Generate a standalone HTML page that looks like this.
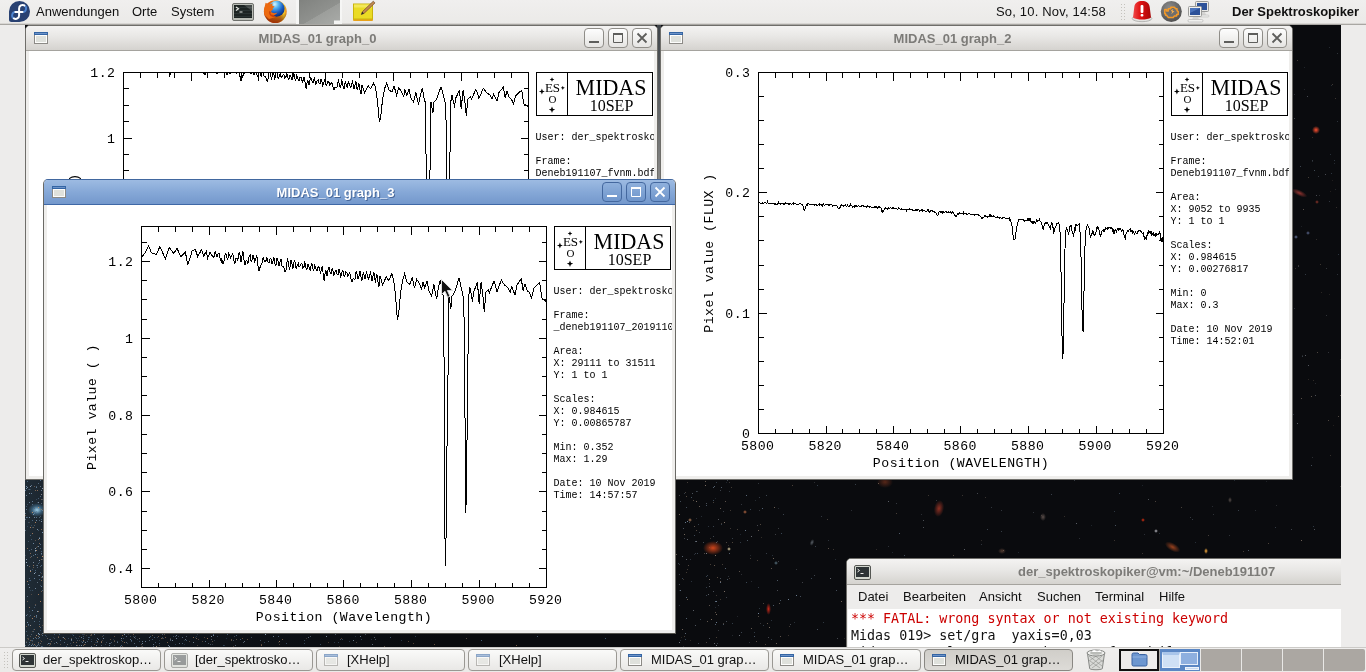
<!DOCTYPE html>
<html><head><meta charset="utf-8"><title>Der Spektroskopiker</title>
<style>
*{box-sizing:border-box;margin:0;padding:0}
html,body{width:1366px;height:672px;overflow:hidden;background:#edeceb;font-family:"Liberation Sans","DejaVu Sans",sans-serif;font-size:13px;color:#111}
#desk{position:absolute;left:25px;top:25px;width:1316px;height:622px;background:#0a0b0e;overflow:hidden}
#sky{position:absolute;left:-25px;top:-25px;width:1366px;height:672px}
#sky i{position:absolute;display:block}
#sky i.g{border-radius:50%}
#top{position:absolute;left:0;top:0;width:1366px;height:25px;background:linear-gradient(#f0efee,#ebeae8 23px,#d8d6d3 23.5px,#a9a7a3 24px,#a9a7a3 25px);z-index:50}
#top .mi{position:absolute;top:4px;font-size:13px;line-height:15px;white-space:nowrap}
#bot{position:absolute;left:0;top:647px;width:1366px;height:25px;background:linear-gradient(#a9a7a2,#efeeed 1px,#ebeae8 24px);z-index:50}
.fed{position:absolute;left:9px;top:1px}
.win,#term,#top,#bot{will-change:transform}
.win{position:absolute;width:633px;border:1px solid #6f6e6a;border-radius:5px 5px 0 0;background:#efeeec;overflow:hidden}
.win .tb{position:absolute;left:0;top:0;width:631px;height:25px;background:linear-gradient(#f4f3f2,#e8e7e5 45%,#d5d3cf);border-bottom:1px solid #a5a39e}
.win.foc{border-color:#41679f #6a6965 #55544f}
.win.foc .tb{background:linear-gradient(#9dbbe2,#86a8d7 50%,#7498cc);border-bottom:1px solid #3f68a6}
.win .tt{position:absolute;left:25.5px;width:532px;top:5px;text-align:center;font-weight:bold;font-size:13px;line-height:15px;color:#7c7b78}
.win.foc .tt{color:#fff;text-shadow:1px 1px 0 rgba(50,80,130,.7)}
.wicon{position:absolute;left:8px;top:6px}
.wicon.dim{opacity:.55}
.wbs{position:absolute;right:5px;top:2px;height:20px}
.wb{display:inline-block;width:20px;height:20px;margin-left:4px;border:1px solid #8f8d88;border-radius:4px;background:linear-gradient(#fdfdfd,#e6e5e3);vertical-align:top}
.wb.f{border-color:#44689f;background:linear-gradient(#8fb0dc,#6f95cb)}
.wb svg{display:block}
.client{position:absolute;left:3px;top:25px;width:625px;bottom:3px;background:#fff;overflow:hidden}
.plot{position:absolute;left:0;top:0}
.task{position:absolute;top:2px;width:149px;height:22px;border:1px solid #9a9893;border-radius:4px;background:linear-gradient(#fafaf9,#e9e8e6);font-size:13px;line-height:20px;white-space:nowrap;overflow:hidden}
.task.act{background:linear-gradient(#d0cec9,#dddbd7);border-color:#8a8883}
.task span{position:absolute;left:30px;top:0}
.task .wicon{left:7px;top:4px}
.task .ticon{position:absolute;left:6px;top:3px}
#term{position:absolute;left:846px;top:558px;width:521px;height:121px;border:1px solid #6f6e6a;border-radius:5px 5px 0 0;background:#edeceb;overflow:hidden;z-index:3}
#term .tb{position:absolute;left:0;top:0;width:100%;height:26px;background:linear-gradient(#f4f3f2,#e8e7e5 45%,#d5d3cf);border-bottom:1px solid #a5a39e}
#term .tt{position:absolute;left:171px;top:5px;font-weight:bold;font-size:13px;line-height:15px;color:#7c7b78;white-space:nowrap}
#term .ticon{position:absolute;left:7px;top:6px}
#term .menu{position:absolute;left:0;top:26px;width:100%;height:24px;padding-left:1px;background:#edeceb;font-size:13px;line-height:24px}
#term .menu span{position:absolute;top:0}
#term .scr{position:absolute;left:1px;top:50px;padding-top:1px;width:100%;height:80px;background:#fff;font-family:"DejaVu Sans Mono","Liberation Mono",monospace;font-size:13.33px;line-height:17px;white-space:pre;padding-left:3px}
.side{position:absolute;top:25px;width:25px;height:622px;background:#edeceb;z-index:40}
</style></head><body>
<div id="desk"><div id="sky"><i style="left:25px;top:478px;width:420px;height:170px;background:linear-gradient(to right,#202c36 0,#19222b 30px,#121920 90px,#0d1116 220px,rgba(10,11,14,0) 420px)"></i><i class="g" style="left:28px;top:503px;width:18px;height:14px;background:radial-gradient(closest-side,#9fd0ea,rgba(80,140,180,.5) 55%,transparent)"></i><i style="left:30px;top:571px;width:1px;height:1px;background:#c58f66;opacity:0.85"></i><i style="left:34px;top:578px;width:1px;height:1px;background:#6f8aa8;opacity:0.85"></i><i style="left:34px;top:573px;width:1px;height:1px;background:#a0b4c8;opacity:0.90"></i><i style="left:34px;top:621px;width:1px;height:1px;background:#7fa0bd;opacity:0.57"></i><i style="left:41px;top:519px;width:1px;height:1px;background:#4d6a86;opacity:0.83"></i><i style="left:35px;top:605px;width:1px;height:1px;background:#8fa6bf;opacity:0.44"></i><i style="left:43px;top:487px;width:1px;height:1px;background:#6f8aa8;opacity:0.80"></i><i style="left:30px;top:580px;width:1px;height:1px;background:#55738f;opacity:0.74"></i><i style="left:43px;top:546px;width:1px;height:1px;background:#7fa0bd;opacity:0.88"></i><i style="left:28px;top:541px;width:1px;height:1px;background:#6f8aa8;opacity:0.42"></i><i style="left:29px;top:642px;width:1px;height:1px;background:#55738f;opacity:0.78"></i><i style="left:41px;top:551px;width:1px;height:1px;background:#55738f;opacity:0.67"></i><i style="left:35px;top:548px;width:1px;height:1px;background:#a0b4c8;opacity:0.85"></i><i style="left:38px;top:636px;width:1px;height:1px;background:#9a7a60;opacity:0.90"></i><i style="left:38px;top:507px;width:1px;height:1px;background:#c58f66;opacity:0.88"></i><i style="left:42px;top:576px;width:1px;height:1px;background:#a0b4c8;opacity:0.70"></i><i style="left:44px;top:525px;width:1px;height:1px;background:#8fa6bf;opacity:0.38"></i><i style="left:41px;top:646px;width:1px;height:1px;background:#8fa6bf;opacity:0.54"></i><i style="left:26px;top:631px;width:1px;height:1px;background:#6f8aa8;opacity:0.51"></i><i style="left:40px;top:627px;width:1px;height:1px;background:#6f8aa8;opacity:0.68"></i><i style="left:39px;top:543px;width:1px;height:1px;background:#c58f66;opacity:0.65"></i><i style="left:43px;top:527px;width:1px;height:1px;background:#a0b4c8;opacity:0.90"></i><i style="left:31px;top:493px;width:1px;height:1px;background:#6f8aa8;opacity:0.87"></i><i style="left:43px;top:529px;width:1px;height:1px;background:#9a7a60;opacity:0.44"></i><i style="left:26px;top:626px;width:1px;height:1px;background:#c58f66;opacity:0.55"></i><i style="left:28px;top:625px;width:1px;height:1px;background:#55738f;opacity:0.60"></i><i style="left:35px;top:588px;width:1px;height:1px;background:#8fa6bf;opacity:0.69"></i><i style="left:43px;top:565px;width:1px;height:1px;background:#55738f;opacity:0.70"></i><i style="left:39px;top:637px;width:1px;height:1px;background:#55738f;opacity:0.89"></i><i style="left:35px;top:572px;width:1px;height:1px;background:#6f8aa8;opacity:0.78"></i><i style="left:44px;top:533px;width:1px;height:1px;background:#55738f;opacity:0.69"></i><i style="left:37px;top:490px;width:1px;height:1px;background:#c58f66;opacity:0.61"></i><i style="left:38px;top:539px;width:1px;height:1px;background:#9a7a60;opacity:0.76"></i><i style="left:25px;top:490px;width:1px;height:1px;background:#6f8aa8;opacity:0.88"></i><i style="left:30px;top:557px;width:1px;height:1px;background:#c58f66;opacity:0.45"></i><i style="left:29px;top:607px;width:1px;height:1px;background:#9a7a60;opacity:0.52"></i><i style="left:32px;top:610px;width:1px;height:1px;background:#6f8aa8;opacity:0.88"></i><i style="left:38px;top:502px;width:1px;height:1px;background:#a0b4c8;opacity:0.71"></i><i style="left:30px;top:535px;width:1px;height:1px;background:#55738f;opacity:0.71"></i><i style="left:27px;top:581px;width:1px;height:1px;background:#c58f66;opacity:0.72"></i><i style="left:29px;top:616px;width:1px;height:1px;background:#4d6a86;opacity:0.39"></i><i style="left:39px;top:517px;width:1px;height:1px;background:#7fa0bd;opacity:0.50"></i><i style="left:40px;top:486px;width:1px;height:1px;background:#a0b4c8;opacity:0.52"></i><i style="left:41px;top:577px;width:1px;height:1px;background:#9a7a60;opacity:0.54"></i><i style="left:41px;top:494px;width:1px;height:1px;background:#c58f66;opacity:0.67"></i><i style="left:33px;top:567px;width:1px;height:1px;background:#9a7a60;opacity:0.61"></i><i style="left:37px;top:529px;width:1px;height:1px;background:#55738f;opacity:0.37"></i><i style="left:33px;top:514px;width:1px;height:1px;background:#7fa0bd;opacity:0.87"></i><i style="left:42px;top:646px;width:1px;height:1px;background:#55738f;opacity:0.66"></i><i style="left:44px;top:600px;width:1px;height:1px;background:#6f8aa8;opacity:0.76"></i><i style="left:41px;top:591px;width:1px;height:1px;background:#9a7a60;opacity:0.65"></i><i style="left:42px;top:625px;width:1px;height:1px;background:#9a7a60;opacity:0.42"></i><i style="left:30px;top:486px;width:1px;height:1px;background:#a0b4c8;opacity:0.84"></i><i style="left:42px;top:577px;width:1px;height:1px;background:#6f8aa8;opacity:0.61"></i><i style="left:27px;top:565px;width:1px;height:1px;background:#a0b4c8;opacity:0.71"></i><i style="left:35px;top:550px;width:1px;height:1px;background:#8fa6bf;opacity:0.54"></i><i style="left:30px;top:625px;width:1px;height:1px;background:#7fa0bd;opacity:0.80"></i><i style="left:26px;top:517px;width:1px;height:1px;background:#8fa6bf;opacity:0.64"></i><i style="left:41px;top:509px;width:1px;height:1px;background:#9a7a60;opacity:0.86"></i><i style="left:40px;top:618px;width:1px;height:1px;background:#6f8aa8;opacity:0.62"></i><i style="left:36px;top:547px;width:1px;height:1px;background:#9a7a60;opacity:0.49"></i><i style="left:37px;top:567px;width:1px;height:1px;background:#6f8aa8;opacity:0.61"></i><i style="left:40px;top:480px;width:1px;height:1px;background:#6f8aa8;opacity:0.78"></i><i style="left:26px;top:488px;width:1px;height:1px;background:#7fa0bd;opacity:0.89"></i><i style="left:41px;top:494px;width:1px;height:1px;background:#7fa0bd;opacity:0.52"></i><i style="left:31px;top:539px;width:1px;height:1px;background:#55738f;opacity:0.67"></i><i style="left:32px;top:512px;width:1px;height:1px;background:#c58f66;opacity:0.59"></i><i style="left:27px;top:481px;width:1px;height:1px;background:#55738f;opacity:0.79"></i><i style="left:36px;top:487px;width:1px;height:1px;background:#7fa0bd;opacity:0.68"></i><i style="left:40px;top:544px;width:1px;height:1px;background:#6f8aa8;opacity:0.69"></i><i style="left:33px;top:543px;width:1px;height:1px;background:#7fa0bd;opacity:0.77"></i><i style="left:31px;top:640px;width:1px;height:1px;background:#55738f;opacity:0.60"></i><i style="left:30px;top:570px;width:1px;height:1px;background:#8fa6bf;opacity:0.79"></i><i style="left:29px;top:502px;width:1px;height:1px;background:#6f8aa8;opacity:0.87"></i><i style="left:32px;top:631px;width:1px;height:1px;background:#9a7a60;opacity:0.42"></i><i style="left:38px;top:638px;width:1px;height:1px;background:#55738f;opacity:0.72"></i><i style="left:39px;top:575px;width:1px;height:1px;background:#8fa6bf;opacity:0.80"></i><i style="left:39px;top:560px;width:1px;height:1px;background:#a0b4c8;opacity:0.78"></i><i style="left:26px;top:495px;width:1px;height:1px;background:#8fa6bf;opacity:0.71"></i><i style="left:32px;top:618px;width:1px;height:1px;background:#c58f66;opacity:0.81"></i><i style="left:27px;top:622px;width:1px;height:1px;background:#7fa0bd;opacity:0.81"></i><i style="left:43px;top:577px;width:1px;height:1px;background:#8fa6bf;opacity:0.37"></i><i style="left:40px;top:566px;width:1px;height:1px;background:#a0b4c8;opacity:0.41"></i><i style="left:39px;top:637px;width:1px;height:1px;background:#6f8aa8;opacity:0.65"></i><i style="left:42px;top:510px;width:1px;height:1px;background:#8fa6bf;opacity:0.48"></i><i style="left:28px;top:522px;width:1px;height:1px;background:#55738f;opacity:0.49"></i><i style="left:36px;top:638px;width:1px;height:1px;background:#55738f;opacity:0.88"></i><i style="left:32px;top:520px;width:1px;height:1px;background:#55738f;opacity:0.81"></i><i style="left:43px;top:550px;width:1px;height:1px;background:#7fa0bd;opacity:0.44"></i><i style="left:33px;top:629px;width:1px;height:1px;background:#4d6a86;opacity:0.40"></i><i style="left:39px;top:634px;width:1px;height:1px;background:#7fa0bd;opacity:0.67"></i><i style="left:41px;top:503px;width:1px;height:1px;background:#a0b4c8;opacity:0.43"></i><i style="left:35px;top:637px;width:1px;height:1px;background:#9a7a60;opacity:0.72"></i><i style="left:41px;top:580px;width:1px;height:1px;background:#9a7a60;opacity:0.84"></i><i style="left:31px;top:525px;width:1px;height:1px;background:#55738f;opacity:0.46"></i><i style="left:36px;top:520px;width:1px;height:1px;background:#7fa0bd;opacity:0.78"></i><i style="left:28px;top:647px;width:1px;height:1px;background:#7fa0bd;opacity:0.74"></i><i style="left:29px;top:578px;width:1px;height:1px;background:#6f8aa8;opacity:0.61"></i><i style="left:39px;top:624px;width:1px;height:1px;background:#55738f;opacity:0.78"></i><i style="left:42px;top:488px;width:1px;height:1px;background:#a0b4c8;opacity:0.84"></i><i style="left:37px;top:611px;width:1px;height:1px;background:#8fa6bf;opacity:0.88"></i><i style="left:41px;top:521px;width:1px;height:1px;background:#a0b4c8;opacity:0.78"></i><i style="left:28px;top:584px;width:1px;height:1px;background:#6f8aa8;opacity:0.84"></i><i style="left:30px;top:625px;width:1px;height:1px;background:#c58f66;opacity:0.45"></i><i style="left:27px;top:614px;width:1px;height:1px;background:#8fa6bf;opacity:0.40"></i><i style="left:41px;top:529px;width:1px;height:1px;background:#c58f66;opacity:0.60"></i><i style="left:39px;top:537px;width:1px;height:1px;background:#6f8aa8;opacity:0.53"></i><i style="left:33px;top:562px;width:1px;height:1px;background:#a0b4c8;opacity:0.70"></i><i style="left:39px;top:562px;width:1px;height:1px;background:#4d6a86;opacity:0.65"></i><i style="left:27px;top:526px;width:1px;height:1px;background:#55738f;opacity:0.41"></i><i style="left:42px;top:633px;width:1px;height:1px;background:#8fa6bf;opacity:0.64"></i><i style="left:38px;top:594px;width:1px;height:1px;background:#c58f66;opacity:0.77"></i><i style="left:31px;top:594px;width:1px;height:1px;background:#9a7a60;opacity:0.41"></i><i style="left:43px;top:537px;width:1px;height:1px;background:#8fa6bf;opacity:0.72"></i><i style="left:35px;top:490px;width:1px;height:1px;background:#9a7a60;opacity:0.72"></i><i style="left:36px;top:511px;width:1px;height:1px;background:#4d6a86;opacity:0.45"></i><i style="left:42px;top:590px;width:1px;height:1px;background:#8fa6bf;opacity:0.41"></i><i style="left:36px;top:635px;width:1px;height:1px;background:#55738f;opacity:0.66"></i><i style="left:37px;top:557px;width:1px;height:1px;background:#9a7a60;opacity:0.78"></i><i style="left:38px;top:498px;width:1px;height:1px;background:#4d6a86;opacity:0.76"></i><i style="left:35px;top:604px;width:1px;height:1px;background:#c58f66;opacity:0.40"></i><i style="left:30px;top:489px;width:1px;height:1px;background:#4d6a86;opacity:0.37"></i><i style="left:35px;top:522px;width:1px;height:1px;background:#c58f66;opacity:0.83"></i><i style="left:43px;top:555px;width:1px;height:1px;background:#8fa6bf;opacity:0.54"></i><i style="left:41px;top:499px;width:1px;height:1px;background:#9a7a60;opacity:0.67"></i><i style="left:38px;top:575px;width:1px;height:1px;background:#8fa6bf;opacity:0.45"></i><i style="left:29px;top:550px;width:1px;height:1px;background:#55738f;opacity:0.80"></i><i style="left:39px;top:579px;width:1px;height:1px;background:#4d6a86;opacity:0.82"></i><i style="left:40px;top:572px;width:1px;height:1px;background:#4d6a86;opacity:0.66"></i><i style="left:29px;top:522px;width:1px;height:1px;background:#9a7a60;opacity:0.37"></i><i style="left:40px;top:630px;width:1px;height:1px;background:#55738f;opacity:0.52"></i><i style="left:42px;top:532px;width:1px;height:1px;background:#7fa0bd;opacity:0.89"></i><i style="left:38px;top:530px;width:1px;height:1px;background:#7fa0bd;opacity:0.37"></i><i style="left:29px;top:587px;width:1px;height:1px;background:#8fa6bf;opacity:0.77"></i><i style="left:38px;top:563px;width:1px;height:1px;background:#7fa0bd;opacity:0.46"></i><i style="left:40px;top:516px;width:1px;height:1px;background:#7fa0bd;opacity:0.41"></i><i style="left:30px;top:590px;width:1px;height:1px;background:#4d6a86;opacity:0.42"></i><i style="left:40px;top:585px;width:1px;height:1px;background:#6f8aa8;opacity:0.36"></i><i style="left:37px;top:565px;width:1px;height:1px;background:#7fa0bd;opacity:0.65"></i><i style="left:43px;top:534px;width:1px;height:1px;background:#c58f66;opacity:0.73"></i><i style="left:28px;top:624px;width:1px;height:1px;background:#6f8aa8;opacity:0.74"></i><i style="left:39px;top:538px;width:1px;height:1px;background:#a0b4c8;opacity:0.86"></i><i style="left:41px;top:553px;width:1px;height:1px;background:#a0b4c8;opacity:0.62"></i><i style="left:27px;top:487px;width:1px;height:1px;background:#8fa6bf;opacity:0.81"></i><i style="left:38px;top:546px;width:1px;height:1px;background:#7fa0bd;opacity:0.73"></i><i style="left:35px;top:551px;width:1px;height:1px;background:#7fa0bd;opacity:0.52"></i><i style="left:34px;top:607px;width:1px;height:1px;background:#55738f;opacity:0.59"></i><i style="left:34px;top:486px;width:1px;height:1px;background:#9a7a60;opacity:0.55"></i><i style="left:32px;top:569px;width:1px;height:1px;background:#55738f;opacity:0.47"></i><i style="left:25px;top:515px;width:1px;height:1px;background:#c58f66;opacity:0.43"></i><i style="left:34px;top:513px;width:1px;height:1px;background:#a0b4c8;opacity:0.36"></i><i style="left:36px;top:565px;width:1px;height:1px;background:#6f8aa8;opacity:0.43"></i><i style="left:37px;top:554px;width:1px;height:1px;background:#4d6a86;opacity:0.38"></i><i style="left:25px;top:555px;width:1px;height:1px;background:#55738f;opacity:0.37"></i><i style="left:39px;top:520px;width:1px;height:1px;background:#6f8aa8;opacity:0.57"></i><i style="left:26px;top:642px;width:1px;height:1px;background:#a0b4c8;opacity:0.48"></i><i style="left:32px;top:512px;width:1px;height:1px;background:#c58f66;opacity:0.69"></i><i style="left:32px;top:501px;width:1px;height:1px;background:#6f8aa8;opacity:0.79"></i><i style="left:31px;top:645px;width:1px;height:1px;background:#7fa0bd;opacity:0.78"></i><i style="left:43px;top:562px;width:1px;height:1px;background:#9a7a60;opacity:0.37"></i><i style="left:31px;top:647px;width:1px;height:1px;background:#c58f66;opacity:0.40"></i><i style="left:38px;top:643px;width:1px;height:1px;background:#6f8aa8;opacity:0.41"></i><i style="left:38px;top:483px;width:1px;height:1px;background:#6f8aa8;opacity:0.62"></i><i style="left:29px;top:566px;width:1px;height:1px;background:#c58f66;opacity:0.46"></i><i style="left:44px;top:560px;width:1px;height:1px;background:#7fa0bd;opacity:0.85"></i><i style="left:43px;top:486px;width:1px;height:1px;background:#9a7a60;opacity:0.76"></i><i style="left:37px;top:546px;width:1px;height:1px;background:#9a7a60;opacity:0.45"></i><i style="left:33px;top:565px;width:1px;height:1px;background:#c58f66;opacity:0.65"></i><i style="left:40px;top:548px;width:1px;height:1px;background:#55738f;opacity:0.81"></i><i style="left:36px;top:635px;width:1px;height:1px;background:#c58f66;opacity:0.79"></i><i style="left:33px;top:555px;width:1px;height:1px;background:#7fa0bd;opacity:0.54"></i><i style="left:41px;top:565px;width:1px;height:1px;background:#55738f;opacity:0.87"></i><i style="left:26px;top:509px;width:1px;height:1px;background:#6f8aa8;opacity:0.80"></i><i style="left:27px;top:596px;width:1px;height:1px;background:#8fa6bf;opacity:0.53"></i><i style="left:36px;top:615px;width:1px;height:1px;background:#6f8aa8;opacity:0.83"></i><i style="left:42px;top:556px;width:1px;height:1px;background:#c58f66;opacity:0.90"></i><i style="left:25px;top:513px;width:1px;height:1px;background:#8fa6bf;opacity:0.54"></i><i style="left:31px;top:556px;width:1px;height:1px;background:#a0b4c8;opacity:0.48"></i><i style="left:26px;top:506px;width:1px;height:1px;background:#4d6a86;opacity:0.67"></i><i style="left:25px;top:519px;width:1px;height:1px;background:#a0b4c8;opacity:0.47"></i><i style="left:36px;top:550px;width:1px;height:1px;background:#c58f66;opacity:0.78"></i><i style="left:35px;top:512px;width:1px;height:1px;background:#4d6a86;opacity:0.69"></i><i style="left:26px;top:615px;width:1px;height:1px;background:#6f8aa8;opacity:0.82"></i><i style="left:27px;top:638px;width:1px;height:1px;background:#9a7a60;opacity:0.40"></i><i style="left:34px;top:517px;width:1px;height:1px;background:#8fa6bf;opacity:0.70"></i><i style="left:39px;top:626px;width:1px;height:1px;background:#c58f66;opacity:0.57"></i><i style="left:38px;top:611px;width:1px;height:1px;background:#9a7a60;opacity:0.81"></i><i style="left:36px;top:617px;width:1px;height:1px;background:#a0b4c8;opacity:0.41"></i><i style="left:25px;top:530px;width:1px;height:1px;background:#8fa6bf;opacity:0.54"></i><i style="left:29px;top:607px;width:1px;height:1px;background:#c58f66;opacity:0.58"></i><i style="left:37px;top:582px;width:1px;height:1px;background:#a0b4c8;opacity:0.49"></i><i style="left:41px;top:490px;width:1px;height:1px;background:#a0b4c8;opacity:0.59"></i><i style="left:27px;top:517px;width:1px;height:1px;background:#4d6a86;opacity:0.76"></i><i style="left:29px;top:517px;width:1px;height:1px;background:#7fa0bd;opacity:0.86"></i><i style="left:35px;top:550px;width:1px;height:1px;background:#a0b4c8;opacity:0.85"></i><i style="left:43px;top:561px;width:1px;height:1px;background:#55738f;opacity:0.61"></i><i style="left:36px;top:486px;width:1px;height:1px;background:#6f8aa8;opacity:0.45"></i><i style="left:27px;top:601px;width:1px;height:1px;background:#9a7a60;opacity:0.63"></i><i style="left:26px;top:559px;width:1px;height:1px;background:#a0b4c8;opacity:0.76"></i><i style="left:30px;top:553px;width:1px;height:1px;background:#c58f66;opacity:0.61"></i><i style="left:29px;top:611px;width:1px;height:1px;background:#4d6a86;opacity:0.41"></i><i style="left:31px;top:549px;width:1px;height:1px;background:#8fa6bf;opacity:0.46"></i><i style="left:34px;top:616px;width:1px;height:1px;background:#9a7a60;opacity:0.89"></i><i style="left:44px;top:627px;width:1px;height:1px;background:#c58f66;opacity:0.87"></i><i style="left:33px;top:638px;width:1px;height:1px;background:#7fa0bd;opacity:0.64"></i><i style="left:35px;top:540px;width:1px;height:1px;background:#9a7a60;opacity:0.51"></i><i style="left:34px;top:629px;width:1px;height:1px;background:#9a7a60;opacity:0.76"></i><i style="left:43px;top:567px;width:1px;height:1px;background:#6f8aa8;opacity:0.42"></i><i style="left:35px;top:570px;width:1px;height:1px;background:#4d6a86;opacity:0.87"></i><i style="left:25px;top:645px;width:1px;height:1px;background:#7fa0bd;opacity:0.55"></i><i style="left:43px;top:541px;width:1px;height:1px;background:#6f8aa8;opacity:0.62"></i><i style="left:30px;top:527px;width:1px;height:1px;background:#c58f66;opacity:0.81"></i><i style="left:36px;top:616px;width:1px;height:1px;background:#7fa0bd;opacity:0.52"></i><i style="left:30px;top:615px;width:1px;height:1px;background:#55738f;opacity:0.75"></i><i style="left:31px;top:485px;width:1px;height:1px;background:#6f8aa8;opacity:0.70"></i><i style="left:38px;top:633px;width:1px;height:1px;background:#a0b4c8;opacity:0.87"></i><i style="left:39px;top:621px;width:1px;height:1px;background:#55738f;opacity:0.63"></i><i style="left:41px;top:573px;width:1px;height:1px;background:#9a7a60;opacity:0.36"></i><i style="left:26px;top:562px;width:1px;height:1px;background:#6f8aa8;opacity:0.84"></i><i style="left:42px;top:559px;width:1px;height:1px;background:#55738f;opacity:0.55"></i><i style="left:37px;top:529px;width:1px;height:1px;background:#8fa6bf;opacity:0.73"></i><i style="left:44px;top:572px;width:1px;height:1px;background:#55738f;opacity:0.78"></i><i style="left:33px;top:527px;width:1px;height:1px;background:#9a7a60;opacity:0.60"></i><i style="left:43px;top:506px;width:1px;height:1px;background:#c58f66;opacity:0.43"></i><i style="left:26px;top:562px;width:1px;height:1px;background:#a0b4c8;opacity:0.81"></i><i style="left:43px;top:583px;width:1px;height:1px;background:#6f8aa8;opacity:0.52"></i><i style="left:36px;top:499px;width:1px;height:1px;background:#4d6a86;opacity:0.50"></i><i style="left:38px;top:633px;width:1px;height:1px;background:#8fa6bf;opacity:0.59"></i><i style="left:26px;top:486px;width:1px;height:1px;background:#7fa0bd;opacity:0.84"></i><i style="left:43px;top:588px;width:1px;height:1px;background:#a0b4c8;opacity:0.52"></i><i style="left:32px;top:590px;width:1px;height:1px;background:#55738f;opacity:0.52"></i><i style="left:30px;top:640px;width:1px;height:1px;background:#c58f66;opacity:0.52"></i><i style="left:32px;top:527px;width:1px;height:1px;background:#4d6a86;opacity:0.58"></i><i style="left:33px;top:631px;width:1px;height:1px;background:#7fa0bd;opacity:0.48"></i><i style="left:29px;top:493px;width:1px;height:1px;background:#8fa6bf;opacity:0.76"></i><i style="left:41px;top:586px;width:1px;height:1px;background:#6f8aa8;opacity:0.87"></i><i style="left:44px;top:596px;width:1px;height:1px;background:#55738f;opacity:0.50"></i><i style="left:34px;top:525px;width:1px;height:1px;background:#6f8aa8;opacity:0.45"></i><i style="left:34px;top:508px;width:1px;height:1px;background:#4d6a86;opacity:0.85"></i><i style="left:28px;top:647px;width:1px;height:1px;background:#55738f;opacity:0.71"></i><i style="left:28px;top:489px;width:1px;height:1px;background:#4d6a86;opacity:0.52"></i><i style="left:37px;top:502px;width:1px;height:1px;background:#4d6a86;opacity:0.38"></i><i style="left:43px;top:570px;width:1px;height:1px;background:#55738f;opacity:0.78"></i><i style="left:33px;top:511px;width:1px;height:1px;background:#6f8aa8;opacity:0.50"></i><i style="left:27px;top:504px;width:1px;height:1px;background:#4d6a86;opacity:0.56"></i><i style="left:43px;top:581px;width:1px;height:1px;background:#a0b4c8;opacity:0.35"></i><i style="left:32px;top:504px;width:1px;height:1px;background:#7fa0bd;opacity:0.49"></i><i style="left:32px;top:640px;width:1px;height:1px;background:#7fa0bd;opacity:0.41"></i><i style="left:41px;top:559px;width:1px;height:1px;background:#c58f66;opacity:0.64"></i><i style="left:41px;top:554px;width:1px;height:1px;background:#55738f;opacity:0.61"></i><i style="left:35px;top:554px;width:1px;height:1px;background:#7fa0bd;opacity:0.81"></i><i style="left:29px;top:580px;width:1px;height:1px;background:#4d6a86;opacity:0.52"></i><i style="left:41px;top:641px;width:1px;height:1px;background:#c58f66;opacity:0.50"></i><i style="left:29px;top:489px;width:1px;height:1px;background:#6f8aa8;opacity:0.58"></i><i style="left:42px;top:499px;width:1px;height:1px;background:#6f8aa8;opacity:0.44"></i><i style="left:27px;top:548px;width:1px;height:1px;background:#c58f66;opacity:0.64"></i><i style="left:40px;top:496px;width:1px;height:1px;background:#7fa0bd;opacity:0.53"></i><i style="left:36px;top:517px;width:1px;height:1px;background:#7fa0bd;opacity:0.63"></i><i style="left:32px;top:533px;width:1px;height:1px;background:#c58f66;opacity:0.74"></i><i style="left:40px;top:601px;width:1px;height:1px;background:#c58f66;opacity:0.82"></i><i style="left:96px;top:647px;width:1px;height:1px;background:#4d6a86;opacity:0.39"></i><i style="left:145px;top:641px;width:1px;height:1px;background:#8fa6bf;opacity:0.67"></i><i style="left:157px;top:637px;width:1px;height:1px;background:#4d6a86;opacity:0.53"></i><i style="left:231px;top:640px;width:1px;height:1px;background:#7c6a58;opacity:0.69"></i><i style="left:131px;top:640px;width:1px;height:1px;background:#7c6a58;opacity:0.33"></i><i style="left:236px;top:639px;width:1px;height:1px;background:#7c6a58;opacity:0.72"></i><i style="left:35px;top:645px;width:1px;height:1px;background:#a0b4c8;opacity:0.41"></i><i style="left:84px;top:634px;width:1px;height:1px;background:#7c6a58;opacity:0.41"></i><i style="left:361px;top:639px;width:1px;height:1px;background:#55738f;opacity:0.49"></i><i style="left:131px;top:641px;width:1px;height:1px;background:#6f8aa8;opacity:0.45"></i><i style="left:196px;top:638px;width:1px;height:1px;background:#b58a66;opacity:0.64"></i><i style="left:31px;top:634px;width:1px;height:1px;background:#a0b4c8;opacity:0.37"></i><i style="left:56px;top:642px;width:1px;height:1px;background:#8fa6bf;opacity:0.74"></i><i style="left:186px;top:636px;width:1px;height:1px;background:#a0b4c8;opacity:0.44"></i><i style="left:233px;top:646px;width:1px;height:1px;background:#7c6a58;opacity:0.52"></i><i style="left:64px;top:638px;width:1px;height:1px;background:#b58a66;opacity:0.72"></i><i style="left:182px;top:643px;width:1px;height:1px;background:#6f8aa8;opacity:0.55"></i><i style="left:120px;top:646px;width:1px;height:1px;background:#8fa6bf;opacity:0.54"></i><i style="left:133px;top:636px;width:1px;height:1px;background:#55738f;opacity:0.39"></i><i style="left:114px;top:645px;width:1px;height:1px;background:#a0b4c8;opacity:0.31"></i><i style="left:37px;top:645px;width:1px;height:1px;background:#8fa6bf;opacity:0.54"></i><i style="left:42px;top:635px;width:1px;height:1px;background:#8fa6bf;opacity:0.56"></i><i style="left:243px;top:642px;width:1px;height:1px;background:#a0b4c8;opacity:0.44"></i><i style="left:124px;top:642px;width:1px;height:1px;background:#b58a66;opacity:0.65"></i><i style="left:184px;top:644px;width:1px;height:1px;background:#4d6a86;opacity:0.33"></i><i style="left:117px;top:633px;width:1px;height:1px;background:#a0b4c8;opacity:0.76"></i><i style="left:76px;top:642px;width:1px;height:1px;background:#b58a66;opacity:0.51"></i><i style="left:81px;top:641px;width:1px;height:1px;background:#4d6a86;opacity:0.40"></i><i style="left:82px;top:642px;width:1px;height:1px;background:#6f8aa8;opacity:0.75"></i><i style="left:71px;top:640px;width:1px;height:1px;background:#8fa6bf;opacity:0.59"></i><i style="left:131px;top:640px;width:1px;height:1px;background:#55738f;opacity:0.76"></i><i style="left:88px;top:639px;width:1px;height:1px;background:#4d6a86;opacity:0.79"></i><i style="left:135px;top:636px;width:1px;height:1px;background:#4d6a86;opacity:0.47"></i><i style="left:202px;top:641px;width:1px;height:1px;background:#7c6a58;opacity:0.57"></i><i style="left:141px;top:644px;width:1px;height:1px;background:#7c6a58;opacity:0.73"></i><i style="left:134px;top:643px;width:1px;height:1px;background:#8fa6bf;opacity:0.52"></i><i style="left:85px;top:642px;width:1px;height:1px;background:#a0b4c8;opacity:0.74"></i><i style="left:355px;top:636px;width:1px;height:1px;background:#55738f;opacity:0.35"></i><i style="left:401px;top:640px;width:1px;height:1px;background:#55738f;opacity:0.41"></i><i style="left:130px;top:636px;width:1px;height:1px;background:#6f8aa8;opacity:0.46"></i><i style="left:32px;top:643px;width:1px;height:1px;background:#b58a66;opacity:0.33"></i><i style="left:375px;top:639px;width:1px;height:1px;background:#a0b4c8;opacity:0.41"></i><i style="left:59px;top:634px;width:1px;height:1px;background:#4d6a86;opacity:0.67"></i><i style="left:178px;top:636px;width:1px;height:1px;background:#4d6a86;opacity:0.52"></i><i style="left:142px;top:643px;width:1px;height:1px;background:#8fa6bf;opacity:0.71"></i><i style="left:76px;top:638px;width:1px;height:1px;background:#8fa6bf;opacity:0.39"></i><i style="left:26px;top:641px;width:1px;height:1px;background:#7c6a58;opacity:0.39"></i><i style="left:195px;top:637px;width:1px;height:1px;background:#4d6a86;opacity:0.33"></i><i style="left:102px;top:640px;width:1px;height:1px;background:#7c6a58;opacity:0.39"></i><i style="left:353px;top:640px;width:1px;height:1px;background:#a0b4c8;opacity:0.64"></i><i style="left:80px;top:647px;width:1px;height:1px;background:#4d6a86;opacity:0.50"></i><i style="left:334px;top:642px;width:1px;height:1px;background:#55738f;opacity:0.39"></i><i style="left:57px;top:643px;width:1px;height:1px;background:#7c6a58;opacity:0.46"></i><i style="left:176px;top:638px;width:1px;height:1px;background:#8fa6bf;opacity:0.73"></i><i style="left:235px;top:645px;width:1px;height:1px;background:#a0b4c8;opacity:0.49"></i><i style="left:54px;top:634px;width:1px;height:1px;background:#4d6a86;opacity:0.71"></i><i style="left:47px;top:644px;width:1px;height:1px;background:#7c6a58;opacity:0.60"></i><i style="left:97px;top:641px;width:1px;height:1px;background:#b58a66;opacity:0.74"></i><i style="left:516px;top:645px;width:1px;height:1px;background:#b58a66;opacity:0.63"></i><i style="left:156px;top:646px;width:1px;height:1px;background:#a0b4c8;opacity:0.64"></i><i style="left:40px;top:640px;width:1px;height:1px;background:#7c6a58;opacity:0.39"></i><i style="left:182px;top:637px;width:1px;height:1px;background:#8fa6bf;opacity:0.58"></i><i style="left:87px;top:641px;width:1px;height:1px;background:#4d6a86;opacity:0.76"></i><i style="left:79px;top:640px;width:1px;height:1px;background:#7c6a58;opacity:0.50"></i><i style="left:83px;top:641px;width:1px;height:1px;background:#6f8aa8;opacity:0.66"></i><i style="left:189px;top:641px;width:1px;height:1px;background:#b58a66;opacity:0.40"></i><i style="left:128px;top:634px;width:1px;height:1px;background:#7c6a58;opacity:0.36"></i><i style="left:28px;top:638px;width:1px;height:1px;background:#7c6a58;opacity:0.56"></i><i style="left:75px;top:637px;width:1px;height:1px;background:#4d6a86;opacity:0.42"></i><i style="left:63px;top:637px;width:1px;height:1px;background:#8fa6bf;opacity:0.77"></i><i style="left:204px;top:637px;width:1px;height:1px;background:#b58a66;opacity:0.39"></i><i style="left:51px;top:641px;width:1px;height:1px;background:#7c6a58;opacity:0.77"></i><i style="left:89px;top:637px;width:1px;height:1px;background:#4d6a86;opacity:0.67"></i><i style="left:136px;top:646px;width:1px;height:1px;background:#6f8aa8;opacity:0.73"></i><i style="left:72px;top:647px;width:1px;height:1px;background:#4d6a86;opacity:0.79"></i><i style="left:78px;top:638px;width:1px;height:1px;background:#55738f;opacity:0.37"></i><i style="left:215px;top:647px;width:1px;height:1px;background:#8fa6bf;opacity:0.49"></i><i style="left:77px;top:645px;width:1px;height:1px;background:#b58a66;opacity:0.51"></i><i style="left:228px;top:647px;width:1px;height:1px;background:#a0b4c8;opacity:0.43"></i><i style="left:114px;top:641px;width:1px;height:1px;background:#7c6a58;opacity:0.75"></i><i style="left:49px;top:639px;width:1px;height:1px;background:#6f8aa8;opacity:0.41"></i><i style="left:60px;top:644px;width:1px;height:1px;background:#7c6a58;opacity:0.66"></i><i style="left:95px;top:642px;width:1px;height:1px;background:#4d6a86;opacity:0.32"></i><i style="left:279px;top:641px;width:1px;height:1px;background:#b58a66;opacity:0.78"></i><i style="left:79px;top:636px;width:1px;height:1px;background:#b58a66;opacity:0.34"></i><i style="left:91px;top:639px;width:1px;height:1px;background:#4d6a86;opacity:0.37"></i><i style="left:268px;top:641px;width:1px;height:1px;background:#8fa6bf;opacity:0.43"></i><i style="left:94px;top:634px;width:1px;height:1px;background:#6f8aa8;opacity:0.74"></i><i style="left:38px;top:634px;width:1px;height:1px;background:#55738f;opacity:0.56"></i><i style="left:40px;top:643px;width:1px;height:1px;background:#7c6a58;opacity:0.80"></i><i style="left:127px;top:643px;width:1px;height:1px;background:#6f8aa8;opacity:0.33"></i><i style="left:110px;top:643px;width:1px;height:1px;background:#a0b4c8;opacity:0.39"></i><i style="left:226px;top:638px;width:1px;height:1px;background:#4d6a86;opacity:0.35"></i><i style="left:67px;top:644px;width:1px;height:1px;background:#a0b4c8;opacity:0.31"></i><i style="left:413px;top:643px;width:1px;height:1px;background:#b58a66;opacity:0.41"></i><i style="left:113px;top:639px;width:1px;height:1px;background:#55738f;opacity:0.30"></i><i style="left:47px;top:638px;width:1px;height:1px;background:#a0b4c8;opacity:0.46"></i><i style="left:122px;top:641px;width:1px;height:1px;background:#7c6a58;opacity:0.63"></i><i style="left:28px;top:639px;width:1px;height:1px;background:#7c6a58;opacity:0.47"></i><i style="left:102px;top:636px;width:1px;height:1px;background:#7c6a58;opacity:0.56"></i><i style="left:341px;top:638px;width:1px;height:1px;background:#b58a66;opacity:0.40"></i><i style="left:408px;top:641px;width:1px;height:1px;background:#b58a66;opacity:0.45"></i><i style="left:304px;top:640px;width:1px;height:1px;background:#6f8aa8;opacity:0.44"></i><i style="left:141px;top:646px;width:1px;height:1px;background:#7c6a58;opacity:0.37"></i><i style="left:170px;top:640px;width:1px;height:1px;background:#8fa6bf;opacity:0.48"></i><i style="left:43px;top:647px;width:1px;height:1px;background:#6f8aa8;opacity:0.34"></i><i style="left:304px;top:643px;width:1px;height:1px;background:#55738f;opacity:0.51"></i><i style="left:152px;top:633px;width:1px;height:1px;background:#a0b4c8;opacity:0.61"></i><i style="left:214px;top:640px;width:1px;height:1px;background:#6f8aa8;opacity:0.32"></i><i style="left:97px;top:642px;width:1px;height:1px;background:#4d6a86;opacity:0.71"></i><i style="left:320px;top:644px;width:1px;height:1px;background:#4d6a86;opacity:0.61"></i><i style="left:41px;top:634px;width:1px;height:1px;background:#b58a66;opacity:0.32"></i><i style="left:133px;top:634px;width:1px;height:1px;background:#b58a66;opacity:0.50"></i><i style="left:50px;top:643px;width:1px;height:1px;background:#b58a66;opacity:0.55"></i><i style="left:73px;top:642px;width:1px;height:1px;background:#7c6a58;opacity:0.73"></i><i style="left:77px;top:640px;width:1px;height:1px;background:#a0b4c8;opacity:0.33"></i><i style="left:198px;top:639px;width:1px;height:1px;background:#b58a66;opacity:0.47"></i><i style="left:372px;top:644px;width:1px;height:1px;background:#a0b4c8;opacity:0.53"></i><i style="left:58px;top:637px;width:1px;height:1px;background:#b58a66;opacity:0.62"></i><i style="left:50px;top:644px;width:1px;height:1px;background:#b58a66;opacity:0.43"></i><i style="left:179px;top:643px;width:1px;height:1px;background:#a0b4c8;opacity:0.54"></i><i style="left:217px;top:636px;width:1px;height:1px;background:#4d6a86;opacity:0.60"></i><i style="left:335px;top:634px;width:1px;height:1px;background:#a0b4c8;opacity:0.42"></i><i style="left:537px;top:636px;width:1px;height:1px;background:#6f8aa8;opacity:0.63"></i><i style="left:185px;top:639px;width:1px;height:1px;background:#a0b4c8;opacity:0.58"></i><i style="left:121px;top:638px;width:1px;height:1px;background:#a0b4c8;opacity:0.71"></i><i style="left:231px;top:639px;width:1px;height:1px;background:#b58a66;opacity:0.50"></i><i style="left:260px;top:640px;width:1px;height:1px;background:#8fa6bf;opacity:0.41"></i><i style="left:101px;top:642px;width:1px;height:1px;background:#b58a66;opacity:0.72"></i><i style="left:244px;top:641px;width:1px;height:1px;background:#a0b4c8;opacity:0.54"></i><i style="left:170px;top:639px;width:1px;height:1px;background:#8fa6bf;opacity:0.54"></i><i style="left:164px;top:634px;width:1px;height:1px;background:#7c6a58;opacity:0.66"></i><i style="left:121px;top:645px;width:1px;height:1px;background:#55738f;opacity:0.78"></i><i style="left:82px;top:634px;width:1px;height:1px;background:#55738f;opacity:0.37"></i><i style="left:86px;top:635px;width:1px;height:1px;background:#7c6a58;opacity:0.41"></i><i style="left:384px;top:646px;width:1px;height:1px;background:#7c6a58;opacity:0.73"></i><i style="left:176px;top:635px;width:1px;height:1px;background:#8fa6bf;opacity:0.65"></i><i style="left:126px;top:642px;width:1px;height:1px;background:#a0b4c8;opacity:0.46"></i><i style="left:390px;top:637px;width:1px;height:1px;background:#6f8aa8;opacity:0.60"></i><i style="left:162px;top:638px;width:1px;height:1px;background:#7c6a58;opacity:0.49"></i><i style="left:162px;top:634px;width:1px;height:1px;background:#a0b4c8;opacity:0.42"></i><i style="left:46px;top:636px;width:1px;height:1px;background:#4d6a86;opacity:0.41"></i><i style="left:149px;top:637px;width:1px;height:1px;background:#8fa6bf;opacity:0.72"></i><i style="left:114px;top:636px;width:1px;height:1px;background:#b58a66;opacity:0.50"></i><i style="left:168px;top:645px;width:1px;height:1px;background:#8fa6bf;opacity:0.68"></i><i style="left:32px;top:644px;width:1px;height:1px;background:#6f8aa8;opacity:0.70"></i><i style="left:103px;top:638px;width:1px;height:1px;background:#8fa6bf;opacity:0.75"></i><i style="left:142px;top:646px;width:1px;height:1px;background:#7c6a58;opacity:0.69"></i><i style="left:149px;top:640px;width:1px;height:1px;background:#a0b4c8;opacity:0.43"></i><i style="left:62px;top:637px;width:1px;height:1px;background:#7c6a58;opacity:0.40"></i><i style="left:155px;top:642px;width:1px;height:1px;background:#6f8aa8;opacity:0.51"></i><i style="left:94px;top:644px;width:1px;height:1px;background:#b58a66;opacity:0.47"></i><i style="left:154px;top:637px;width:1px;height:1px;background:#6f8aa8;opacity:0.60"></i><i style="left:213px;top:635px;width:1px;height:1px;background:#8fa6bf;opacity:0.74"></i><i style="left:83px;top:638px;width:1px;height:1px;background:#6f8aa8;opacity:0.69"></i><i style="left:111px;top:642px;width:1px;height:1px;background:#6f8aa8;opacity:0.50"></i><i style="left:96px;top:640px;width:1px;height:1px;background:#55738f;opacity:0.65"></i><i style="left:147px;top:647px;width:1px;height:1px;background:#8fa6bf;opacity:0.54"></i><i style="left:101px;top:645px;width:1px;height:1px;background:#a0b4c8;opacity:0.44"></i><i style="left:96px;top:645px;width:1px;height:1px;background:#8fa6bf;opacity:0.72"></i><i style="left:139px;top:638px;width:1px;height:1px;background:#6f8aa8;opacity:0.77"></i><i style="left:139px;top:638px;width:1px;height:1px;background:#7c6a58;opacity:0.55"></i><i style="left:208px;top:643px;width:1px;height:1px;background:#8fa6bf;opacity:0.42"></i><i style="left:83px;top:640px;width:1px;height:1px;background:#b58a66;opacity:0.73"></i><i style="left:162px;top:637px;width:1px;height:1px;background:#6f8aa8;opacity:0.48"></i><i style="left:295px;top:633px;width:1px;height:1px;background:#8fa6bf;opacity:0.72"></i><i style="left:365px;top:634px;width:1px;height:1px;background:#a0b4c8;opacity:0.38"></i><i style="left:356px;top:642px;width:1px;height:1px;background:#7c6a58;opacity:0.53"></i><i style="left:36px;top:647px;width:1px;height:1px;background:#b58a66;opacity:0.52"></i><i style="left:328px;top:642px;width:1px;height:1px;background:#b58a66;opacity:0.34"></i><i style="left:83px;top:634px;width:1px;height:1px;background:#55738f;opacity:0.35"></i><i style="left:72px;top:634px;width:1px;height:1px;background:#4d6a86;opacity:0.31"></i><i style="left:91px;top:634px;width:1px;height:1px;background:#7c6a58;opacity:0.74"></i><i style="left:286px;top:643px;width:1px;height:1px;background:#4d6a86;opacity:0.65"></i><i style="left:34px;top:644px;width:1px;height:1px;background:#b58a66;opacity:0.78"></i><i style="left:261px;top:645px;width:1px;height:1px;background:#b58a66;opacity:0.57"></i><i style="left:142px;top:641px;width:1px;height:1px;background:#8fa6bf;opacity:0.65"></i><i style="left:47px;top:638px;width:1px;height:1px;background:#7c6a58;opacity:0.56"></i><i style="left:70px;top:643px;width:1px;height:1px;background:#55738f;opacity:0.45"></i><i style="left:106px;top:642px;width:1px;height:1px;background:#6f8aa8;opacity:0.42"></i><i style="left:211px;top:639px;width:1px;height:1px;background:#a0b4c8;opacity:0.42"></i><i style="left:339px;top:646px;width:1px;height:1px;background:#7c6a58;opacity:0.46"></i><i style="left:175px;top:644px;width:1px;height:1px;background:#4d6a86;opacity:0.49"></i><i style="left:273px;top:636px;width:1px;height:1px;background:#a0b4c8;opacity:0.66"></i><i style="left:169px;top:646px;width:1px;height:1px;background:#a0b4c8;opacity:0.71"></i><i style="left:122px;top:646px;width:1px;height:1px;background:#b58a66;opacity:0.48"></i><i style="left:156px;top:646px;width:1px;height:1px;background:#b58a66;opacity:0.62"></i><i style="left:121px;top:640px;width:1px;height:1px;background:#55738f;opacity:0.60"></i><i style="left:172px;top:640px;width:1px;height:1px;background:#a0b4c8;opacity:0.69"></i><i style="left:159px;top:643px;width:1px;height:1px;background:#55738f;opacity:0.69"></i><i style="left:124px;top:634px;width:1px;height:1px;background:#a0b4c8;opacity:0.69"></i><i style="left:340px;top:639px;width:1px;height:1px;background:#8fa6bf;opacity:0.40"></i><i style="left:32px;top:641px;width:1px;height:1px;background:#7c6a58;opacity:0.43"></i><i style="left:116px;top:647px;width:1px;height:1px;background:#8fa6bf;opacity:0.61"></i><i style="left:45px;top:635px;width:1px;height:1px;background:#4d6a86;opacity:0.63"></i><i style="left:279px;top:644px;width:1px;height:1px;background:#b58a66;opacity:0.35"></i><i style="left:91px;top:641px;width:1px;height:1px;background:#55738f;opacity:0.62"></i><i style="left:153px;top:644px;width:1px;height:1px;background:#8fa6bf;opacity:0.61"></i><i style="left:197px;top:645px;width:1px;height:1px;background:#7c6a58;opacity:0.54"></i><i style="left:126px;top:636px;width:1px;height:1px;background:#8fa6bf;opacity:0.58"></i><i style="left:163px;top:638px;width:1px;height:1px;background:#6f8aa8;opacity:0.39"></i><i style="left:184px;top:640px;width:1px;height:1px;background:#4d6a86;opacity:0.35"></i><i style="left:158px;top:636px;width:1px;height:1px;background:#b58a66;opacity:0.55"></i><i style="left:205px;top:641px;width:1px;height:1px;background:#6f8aa8;opacity:0.68"></i><i style="left:103px;top:635px;width:1px;height:1px;background:#4d6a86;opacity:0.58"></i><i style="left:605px;top:638px;width:1px;height:1px;background:#55738f;opacity:0.71"></i><i style="left:110px;top:639px;width:1px;height:1px;background:#b58a66;opacity:0.50"></i><i style="left:71px;top:639px;width:1px;height:1px;background:#a0b4c8;opacity:0.72"></i><i style="left:264px;top:642px;width:1px;height:1px;background:#4d6a86;opacity:0.51"></i><i style="left:135px;top:638px;width:1px;height:1px;background:#6f8aa8;opacity:0.39"></i><i style="left:48px;top:643px;width:1px;height:1px;background:#a0b4c8;opacity:0.64"></i><i style="left:98px;top:639px;width:1px;height:1px;background:#8fa6bf;opacity:0.64"></i><i style="left:53px;top:637px;width:1px;height:1px;background:#4d6a86;opacity:0.39"></i><i style="left:66px;top:646px;width:1px;height:1px;background:#4d6a86;opacity:0.74"></i><i style="left:49px;top:643px;width:1px;height:1px;background:#4d6a86;opacity:0.78"></i><i style="left:415px;top:636px;width:1px;height:1px;background:#55738f;opacity:0.49"></i><i style="left:73px;top:635px;width:1px;height:1px;background:#4d6a86;opacity:0.74"></i><i style="left:157px;top:633px;width:1px;height:1px;background:#b58a66;opacity:0.38"></i><i style="left:33px;top:645px;width:1px;height:1px;background:#55738f;opacity:0.74"></i><i style="left:117px;top:641px;width:1px;height:1px;background:#55738f;opacity:0.52"></i><i style="left:240px;top:639px;width:1px;height:1px;background:#4d6a86;opacity:0.80"></i><i style="left:210px;top:644px;width:1px;height:1px;background:#a0b4c8;opacity:0.35"></i><i style="left:83px;top:645px;width:1px;height:1px;background:#b58a66;opacity:0.59"></i><i style="left:81px;top:645px;width:1px;height:1px;background:#4d6a86;opacity:0.43"></i><i style="left:167px;top:642px;width:1px;height:1px;background:#b58a66;opacity:0.58"></i><i style="left:247px;top:639px;width:1px;height:1px;background:#b58a66;opacity:0.47"></i><i style="left:466px;top:638px;width:1px;height:1px;background:#7c6a58;opacity:0.68"></i><i style="left:251px;top:637px;width:1px;height:1px;background:#8fa6bf;opacity:0.40"></i><i style="left:84px;top:644px;width:1px;height:1px;background:#b58a66;opacity:0.66"></i><i style="left:186px;top:640px;width:1px;height:1px;background:#4d6a86;opacity:0.74"></i><i style="left:36px;top:646px;width:1px;height:1px;background:#6f8aa8;opacity:0.79"></i><i style="left:152px;top:635px;width:1px;height:1px;background:#7c6a58;opacity:0.78"></i><i style="left:371px;top:639px;width:1px;height:1px;background:#55738f;opacity:0.32"></i><i style="left:67px;top:644px;width:1px;height:1px;background:#7c6a58;opacity:0.57"></i><i style="left:161px;top:638px;width:1px;height:1px;background:#b58a66;opacity:0.56"></i><i style="left:81px;top:637px;width:1px;height:1px;background:#8fa6bf;opacity:0.70"></i><i style="left:306px;top:638px;width:1px;height:1px;background:#7c6a58;opacity:0.42"></i><i style="left:73px;top:642px;width:1px;height:1px;background:#7c6a58;opacity:0.68"></i><i style="left:29px;top:644px;width:1px;height:1px;background:#6f8aa8;opacity:0.79"></i><i style="left:96px;top:642px;width:1px;height:1px;background:#55738f;opacity:0.33"></i><i style="left:338px;top:642px;width:1px;height:1px;background:#4d6a86;opacity:0.51"></i><i style="left:193px;top:637px;width:1px;height:1px;background:#b58a66;opacity:0.75"></i><i style="left:80px;top:647px;width:1px;height:1px;background:#6f8aa8;opacity:0.64"></i><i style="left:65px;top:639px;width:1px;height:1px;background:#b58a66;opacity:0.36"></i><i style="left:349px;top:641px;width:1px;height:1px;background:#4d6a86;opacity:0.44"></i><i style="left:117px;top:642px;width:1px;height:1px;background:#8fa6bf;opacity:0.59"></i><i style="left:130px;top:639px;width:1px;height:1px;background:#6f8aa8;opacity:0.79"></i><i style="left:132px;top:633px;width:1px;height:1px;background:#8fa6bf;opacity:0.61"></i><i style="left:71px;top:638px;width:1px;height:1px;background:#7c6a58;opacity:0.68"></i><i style="left:91px;top:635px;width:1px;height:1px;background:#7c6a58;opacity:0.53"></i><i style="left:278px;top:636px;width:1px;height:1px;background:#55738f;opacity:0.75"></i><i style="left:212px;top:644px;width:1px;height:1px;background:#6f8aa8;opacity:0.32"></i><i style="left:88px;top:637px;width:1px;height:1px;background:#55738f;opacity:0.72"></i><i style="left:234px;top:636px;width:1px;height:1px;background:#8fa6bf;opacity:0.34"></i><i style="left:233px;top:640px;width:1px;height:1px;background:#8fa6bf;opacity:0.37"></i><i style="left:310px;top:636px;width:1px;height:1px;background:#a0b4c8;opacity:0.44"></i><i style="left:71px;top:645px;width:1px;height:1px;background:#7c6a58;opacity:0.45"></i><i style="left:64px;top:642px;width:1px;height:1px;background:#6f8aa8;opacity:0.62"></i><i style="left:152px;top:639px;width:1px;height:1px;background:#55738f;opacity:0.69"></i><i style="left:224px;top:645px;width:1px;height:1px;background:#55738f;opacity:0.39"></i><i style="left:308px;top:637px;width:1px;height:1px;background:#8fa6bf;opacity:0.58"></i><i style="left:342px;top:639px;width:1px;height:1px;background:#6f8aa8;opacity:0.45"></i><i style="left:211px;top:636px;width:1px;height:1px;background:#a0b4c8;opacity:0.79"></i><i style="left:101px;top:641px;width:1px;height:1px;background:#b58a66;opacity:0.60"></i><i style="left:159px;top:645px;width:1px;height:1px;background:#7c6a58;opacity:0.43"></i><i style="left:236px;top:635px;width:1px;height:1px;background:#55738f;opacity:0.73"></i><i style="left:403px;top:633px;width:1px;height:1px;background:#a0b4c8;opacity:0.36"></i><i style="left:326px;top:636px;width:1px;height:1px;background:#a0b4c8;opacity:0.73"></i><i style="left:60px;top:640px;width:1px;height:1px;background:#55738f;opacity:0.78"></i><i style="left:83px;top:636px;width:1px;height:1px;background:#55738f;opacity:0.60"></i><i style="left:153px;top:646px;width:1px;height:1px;background:#a0b4c8;opacity:0.45"></i><i style="left:109px;top:645px;width:1px;height:1px;background:#6f8aa8;opacity:0.70"></i><i style="left:165px;top:633px;width:1px;height:1px;background:#4d6a86;opacity:0.46"></i><i style="left:197px;top:634px;width:1px;height:1px;background:#4d6a86;opacity:0.36"></i><i style="left:193px;top:642px;width:1px;height:1px;background:#a0b4c8;opacity:0.62"></i><i style="left:223px;top:645px;width:1px;height:1px;background:#55738f;opacity:0.51"></i><i style="left:68px;top:638px;width:1px;height:1px;background:#55738f;opacity:0.57"></i><i style="left:58px;top:636px;width:1px;height:1px;background:#b58a66;opacity:0.33"></i><i style="left:54px;top:643px;width:1px;height:1px;background:#a0b4c8;opacity:0.38"></i><i style="left:165px;top:637px;width:1px;height:1px;background:#b58a66;opacity:0.59"></i><i style="left:227px;top:634px;width:1px;height:1px;background:#4d6a86;opacity:0.78"></i><i style="left:38px;top:642px;width:1px;height:1px;background:#b58a66;opacity:0.56"></i><i style="left:30px;top:636px;width:1px;height:1px;background:#7c6a58;opacity:0.66"></i><i style="left:282px;top:639px;width:1px;height:1px;background:#b58a66;opacity:0.62"></i><i style="left:91px;top:646px;width:1px;height:1px;background:#8fa6bf;opacity:0.65"></i><i style="left:278px;top:642px;width:1px;height:1px;background:#7c6a58;opacity:0.30"></i><i style="left:242px;top:638px;width:1px;height:1px;background:#b58a66;opacity:0.51"></i><i style="left:434px;top:644px;width:1px;height:1px;background:#b58a66;opacity:0.52"></i><i style="left:481px;top:640px;width:1px;height:1px;background:#55738f;opacity:0.78"></i><i style="left:213px;top:634px;width:1px;height:1px;background:#55738f;opacity:0.60"></i><i style="left:39px;top:634px;width:1px;height:1px;background:#a0b4c8;opacity:0.61"></i><i style="left:374px;top:637px;width:1px;height:1px;background:#a0b4c8;opacity:0.45"></i><i style="left:212px;top:641px;width:1px;height:1px;background:#7c6a58;opacity:0.73"></i><i style="left:27px;top:635px;width:1px;height:1px;background:#6f8aa8;opacity:0.59"></i><i style="left:50px;top:639px;width:1px;height:1px;background:#6f8aa8;opacity:0.67"></i><i style="left:139px;top:641px;width:1px;height:1px;background:#4d6a86;opacity:0.64"></i><i style="left:49px;top:645px;width:1px;height:1px;background:#b58a66;opacity:0.32"></i><i style="left:114px;top:640px;width:1px;height:1px;background:#7c6a58;opacity:0.49"></i><i style="left:137px;top:639px;width:1px;height:1px;background:#6f8aa8;opacity:0.38"></i><i style="left:344px;top:633px;width:1px;height:1px;background:#55738f;opacity:0.51"></i><i style="left:109px;top:643px;width:1px;height:1px;background:#8fa6bf;opacity:0.62"></i><i style="left:90px;top:635px;width:1px;height:1px;background:#7c6a58;opacity:0.48"></i><i style="left:261px;top:644px;width:1px;height:1px;background:#b58a66;opacity:0.47"></i><i style="left:365px;top:633px;width:1px;height:1px;background:#4d6a86;opacity:0.62"></i><i style="left:159px;top:640px;width:1px;height:1px;background:#55738f;opacity:0.30"></i><i style="left:207px;top:638px;width:1px;height:1px;background:#b58a66;opacity:0.79"></i><i style="left:151px;top:647px;width:1px;height:1px;background:#6f8aa8;opacity:0.42"></i><i style="left:54px;top:638px;width:1px;height:1px;background:#a0b4c8;opacity:0.33"></i><i style="left:39px;top:645px;width:1px;height:1px;background:#4d6a86;opacity:0.53"></i><i style="left:40px;top:647px;width:1px;height:1px;background:#7c6a58;opacity:0.37"></i><i style="left:105px;top:644px;width:1px;height:1px;background:#6f8aa8;opacity:0.33"></i><i style="left:81px;top:645px;width:1px;height:1px;background:#8fa6bf;opacity:0.73"></i><i style="left:28px;top:639px;width:1px;height:1px;background:#7c6a58;opacity:0.32"></i><i style="left:175px;top:636px;width:1px;height:1px;background:#6f8aa8;opacity:0.47"></i><i style="left:360px;top:636px;width:1px;height:1px;background:#8fa6bf;opacity:0.72"></i><i style="left:76px;top:645px;width:1px;height:1px;background:#8fa6bf;opacity:0.75"></i><i style="left:97px;top:638px;width:1px;height:1px;background:#6f8aa8;opacity:0.75"></i><i style="left:173px;top:636px;width:1px;height:1px;background:#6f8aa8;opacity:0.47"></i><i style="left:79px;top:645px;width:1px;height:1px;background:#8fa6bf;opacity:0.53"></i><i style="left:134px;top:637px;width:1px;height:1px;background:#a0b4c8;opacity:0.56"></i><i style="left:196px;top:636px;width:1px;height:1px;background:#55738f;opacity:0.34"></i><i style="left:28px;top:645px;width:1px;height:1px;background:#8fa6bf;opacity:0.43"></i><i style="left:122px;top:635px;width:1px;height:1px;background:#b58a66;opacity:0.67"></i><i style="left:85px;top:644px;width:1px;height:1px;background:#7c6a58;opacity:0.35"></i><i style="left:123px;top:638px;width:1px;height:1px;background:#4d6a86;opacity:0.70"></i><i style="left:38px;top:644px;width:1px;height:1px;background:#6f8aa8;opacity:0.63"></i><i style="left:150px;top:636px;width:1px;height:1px;background:#4d6a86;opacity:0.77"></i><i style="left:265px;top:634px;width:1px;height:1px;background:#a0b4c8;opacity:0.80"></i><i style="left:170px;top:638px;width:1px;height:1px;background:#7c6a58;opacity:0.52"></i><i style="left:178px;top:647px;width:1px;height:1px;background:#55738f;opacity:0.35"></i><i style="left:726px;top:597px;width:1px;height:1px;background:#5d6570;opacity:0.59"></i><i style="left:757px;top:560px;width:1px;height:1px;background:#7a6a5a;opacity:0.52"></i><i style="left:698px;top:643px;width:1px;height:1px;background:#8aa0b8;opacity:0.35"></i><i style="left:765px;top:644px;width:1px;height:1px;background:#7a6a5a;opacity:0.55"></i><i style="left:713px;top:487px;width:1px;height:1px;background:#6f7f90;opacity:0.72"></i><i style="left:757px;top:525px;width:1px;height:1px;background:#8a8f98;opacity:0.45"></i><i style="left:706px;top:553px;width:1px;height:1px;background:#8a8f98;opacity:0.80"></i><i style="left:699px;top:532px;width:1px;height:1px;background:#5d6570;opacity:0.60"></i><i style="left:769px;top:627px;width:1px;height:1px;background:#9a8878;opacity:0.75"></i><i style="left:685px;top:492px;width:1px;height:1px;background:#9a8878;opacity:0.42"></i><i style="left:707px;top:575px;width:1px;height:1px;background:#8aa0b8;opacity:0.35"></i><i style="left:680px;top:501px;width:1px;height:1px;background:#6f7f90;opacity:0.54"></i><i style="left:679px;top:514px;width:1px;height:1px;background:#9a8878;opacity:0.70"></i><i style="left:729px;top:491px;width:1px;height:1px;background:#6f7f90;opacity:0.36"></i><i style="left:771px;top:639px;width:1px;height:1px;background:#4f6070;opacity:0.60"></i><i style="left:723px;top:623px;width:1px;height:1px;background:#9a8878;opacity:0.42"></i><i style="left:706px;top:642px;width:1px;height:1px;background:#9a8878;opacity:0.42"></i><i style="left:732px;top:542px;width:1px;height:1px;background:#7a6a5a;opacity:0.58"></i><i style="left:706px;top:505px;width:1px;height:1px;background:#8aa0b8;opacity:0.48"></i><i style="left:821px;top:516px;width:1px;height:1px;background:#6f7f90;opacity:0.39"></i><i style="left:696px;top:491px;width:1px;height:1px;background:#6f7f90;opacity:0.52"></i><i style="left:756px;top:641px;width:1px;height:1px;background:#7a6a5a;opacity:0.68"></i><i style="left:679px;top:564px;width:1px;height:1px;background:#5d6570;opacity:0.56"></i><i style="left:729px;top:482px;width:1px;height:1px;background:#7a6a5a;opacity:0.42"></i><i style="left:676px;top:554px;width:1px;height:1px;background:#9a8878;opacity:0.62"></i><i style="left:758px;top:587px;width:1px;height:1px;background:#8aa0b8;opacity:0.31"></i><i style="left:713px;top:536px;width:1px;height:1px;background:#5d6570;opacity:0.68"></i><i style="left:732px;top:538px;width:1px;height:1px;background:#6f7f90;opacity:0.43"></i><i style="left:727px;top:579px;width:1px;height:1px;background:#6f7f90;opacity:0.59"></i><i style="left:687px;top:521px;width:1px;height:1px;background:#8aa0b8;opacity:0.77"></i><i style="left:730px;top:528px;width:1px;height:1px;background:#9a8878;opacity:0.34"></i><i style="left:713px;top:526px;width:1px;height:1px;background:#6f7f90;opacity:0.48"></i><i style="left:683px;top:646px;width:1px;height:1px;background:#5d6570;opacity:0.38"></i><i style="left:718px;top:519px;width:1px;height:1px;background:#8a8f98;opacity:0.58"></i><i style="left:686px;top:572px;width:1px;height:1px;background:#7a6a5a;opacity:0.51"></i><i style="left:680px;top:590px;width:1px;height:1px;background:#8aa0b8;opacity:0.66"></i><i style="left:695px;top:541px;width:1px;height:1px;background:#4f6070;opacity:0.62"></i><i style="left:731px;top:487px;width:1px;height:1px;background:#7a6a5a;opacity:0.51"></i><i style="left:741px;top:504px;width:1px;height:1px;background:#5d6570;opacity:0.47"></i><i style="left:723px;top:511px;width:1px;height:1px;background:#5d6570;opacity:0.55"></i><i style="left:680px;top:640px;width:1px;height:1px;background:#4f6070;opacity:0.41"></i><i style="left:722px;top:564px;width:1px;height:1px;background:#7a6a5a;opacity:0.53"></i><i style="left:711px;top:619px;width:1px;height:1px;background:#9a8878;opacity:0.77"></i><i style="left:755px;top:500px;width:1px;height:1px;background:#4f6070;opacity:0.36"></i><i style="left:693px;top:500px;width:1px;height:1px;background:#7a6a5a;opacity:0.69"></i><i style="left:709px;top:586px;width:1px;height:1px;background:#8a8f98;opacity:0.58"></i><i style="left:715px;top:624px;width:1px;height:1px;background:#8aa0b8;opacity:0.54"></i><i style="left:754px;top:632px;width:1px;height:1px;background:#4f6070;opacity:0.57"></i><i style="left:723px;top:624px;width:1px;height:1px;background:#8aa0b8;opacity:0.48"></i><i style="left:706px;top:576px;width:1px;height:1px;background:#4f6070;opacity:0.65"></i><i style="left:713px;top:500px;width:1px;height:1px;background:#4f6070;opacity:0.76"></i><i style="left:779px;top:603px;width:1px;height:1px;background:#9a8878;opacity:0.60"></i><i style="left:766px;top:495px;width:1px;height:1px;background:#6f7f90;opacity:0.51"></i><i style="left:697px;top:553px;width:1px;height:1px;background:#4f6070;opacity:0.73"></i><i style="left:732px;top:635px;width:1px;height:1px;background:#5d6570;opacity:0.32"></i><i style="left:685px;top:522px;width:1px;height:1px;background:#8aa0b8;opacity:0.75"></i><i style="left:694px;top:526px;width:1px;height:1px;background:#9a8878;opacity:0.56"></i><i style="left:682px;top:578px;width:1px;height:1px;background:#4f6070;opacity:0.67"></i><i style="left:790px;top:624px;width:1px;height:1px;background:#8a8f98;opacity:0.45"></i><i style="left:679px;top:584px;width:1px;height:1px;background:#5d6570;opacity:0.76"></i><i style="left:716px;top:614px;width:1px;height:1px;background:#9a8878;opacity:0.72"></i><i style="left:693px;top:610px;width:1px;height:1px;background:#8a8f98;opacity:0.62"></i><i style="left:767px;top:623px;width:1px;height:1px;background:#7a6a5a;opacity:0.77"></i><i style="left:679px;top:642px;width:1px;height:1px;background:#8a8f98;opacity:0.80"></i><i style="left:763px;top:603px;width:1px;height:1px;background:#9a8878;opacity:0.45"></i><i style="left:715px;top:612px;width:1px;height:1px;background:#7a6a5a;opacity:0.71"></i><i style="left:726px;top:542px;width:1px;height:1px;background:#9a8878;opacity:0.45"></i><i style="left:714px;top:486px;width:1px;height:1px;background:#6f7f90;opacity:0.75"></i><i style="left:716px;top:542px;width:1px;height:1px;background:#6f7f90;opacity:0.67"></i><i style="left:696px;top:501px;width:1px;height:1px;background:#9a8878;opacity:0.77"></i><i style="left:721px;top:487px;width:1px;height:1px;background:#6f7f90;opacity:0.66"></i><i style="left:759px;top:608px;width:1px;height:1px;background:#4f6070;opacity:0.51"></i><i style="left:727px;top:480px;width:1px;height:1px;background:#5d6570;opacity:0.61"></i><i style="left:687px;top:539px;width:1px;height:1px;background:#8a8f98;opacity:0.64"></i><i style="left:788px;top:599px;width:1px;height:1px;background:#8aa0b8;opacity:0.77"></i><i style="left:720px;top:490px;width:1px;height:1px;background:#5d6570;opacity:0.58"></i><i style="left:729px;top:553px;width:1px;height:1px;background:#6f7f90;opacity:0.71"></i><i style="left:728px;top:478px;width:1px;height:1px;background:#5d6570;opacity:0.47"></i><i style="left:718px;top:605px;width:1px;height:1px;background:#5d6570;opacity:0.48"></i><i style="left:720px;top:582px;width:1px;height:1px;background:#8aa0b8;opacity:0.66"></i><i style="left:710px;top:538px;width:1px;height:1px;background:#7a6a5a;opacity:0.42"></i><i style="left:686px;top:618px;width:1px;height:1px;background:#6f7f90;opacity:0.72"></i><i style="left:745px;top:530px;width:1px;height:1px;background:#8aa0b8;opacity:0.69"></i><i style="left:759px;top:510px;width:1px;height:1px;background:#8a8f98;opacity:0.31"></i><i style="left:763px;top:625px;width:1px;height:1px;background:#4f6070;opacity:0.58"></i><i style="left:728px;top:545px;width:1px;height:1px;background:#7a6a5a;opacity:0.36"></i><i style="left:896px;top:513px;width:1px;height:1px;background:#7a6a5a;opacity:0.55"></i><i style="left:833px;top:549px;width:1px;height:1px;background:#7a6a5a;opacity:0.48"></i><i style="left:684px;top:636px;width:1px;height:1px;background:#7a6a5a;opacity:0.50"></i><i style="left:773px;top:605px;width:1px;height:1px;background:#8aa0b8;opacity:0.50"></i><i style="left:690px;top:559px;width:1px;height:1px;background:#8aa0b8;opacity:0.30"></i><i style="left:716px;top:601px;width:1px;height:1px;background:#8aa0b8;opacity:0.72"></i><i style="left:686px;top:496px;width:1px;height:1px;background:#7a6a5a;opacity:0.67"></i><i style="left:730px;top:510px;width:1px;height:1px;background:#7a6a5a;opacity:0.46"></i><i style="left:717px;top:643px;width:1px;height:1px;background:#4f6070;opacity:0.56"></i><i style="left:724px;top:591px;width:1px;height:1px;background:#9a8878;opacity:0.78"></i><i style="left:709px;top:605px;width:1px;height:1px;background:#9a8878;opacity:0.55"></i><i style="left:709px;top:583px;width:1px;height:1px;background:#5d6570;opacity:0.31"></i><i style="left:746px;top:495px;width:1px;height:1px;background:#6f7f90;opacity:0.79"></i><i style="left:703px;top:542px;width:1px;height:1px;background:#5d6570;opacity:0.68"></i><i style="left:682px;top:629px;width:1px;height:1px;background:#9a8878;opacity:0.70"></i><i style="left:717px;top:577px;width:1px;height:1px;background:#7a6a5a;opacity:0.67"></i><i style="left:746px;top:582px;width:1px;height:1px;background:#4f6070;opacity:0.71"></i><i style="left:690px;top:640px;width:1px;height:1px;background:#7a6a5a;opacity:0.31"></i><i style="left:709px;top:638px;width:1px;height:1px;background:#5d6570;opacity:0.76"></i><i style="left:706px;top:587px;width:1px;height:1px;background:#4f6070;opacity:0.59"></i><i style="left:696px;top:541px;width:1px;height:1px;background:#8a8f98;opacity:0.75"></i><i style="left:721px;top:523px;width:1px;height:1px;background:#7a6a5a;opacity:0.51"></i><i style="left:720px;top:581px;width:1px;height:1px;background:#9a8878;opacity:0.67"></i><i style="left:781px;top:533px;width:1px;height:1px;background:#4f6070;opacity:0.70"></i><i style="left:689px;top:522px;width:1px;height:1px;background:#4f6070;opacity:0.70"></i><i style="left:686px;top:597px;width:1px;height:1px;background:#8aa0b8;opacity:0.61"></i><i style="left:728px;top:576px;width:1px;height:1px;background:#6f7f90;opacity:0.34"></i><i style="left:691px;top:581px;width:1px;height:1px;background:#4f6070;opacity:0.47"></i><i style="left:796px;top:595px;width:1px;height:1px;background:#8aa0b8;opacity:0.75"></i><i style="left:698px;top:524px;width:1px;height:1px;background:#8aa0b8;opacity:0.34"></i><i style="left:687px;top:569px;width:1px;height:1px;background:#7a6a5a;opacity:0.50"></i><i style="left:709px;top:647px;width:1px;height:1px;background:#4f6070;opacity:0.35"></i><i style="left:686px;top:559px;width:1px;height:1px;background:#8a8f98;opacity:0.62"></i><i style="left:685px;top:639px;width:1px;height:1px;background:#4f6070;opacity:0.71"></i><i style="left:726px;top:621px;width:1px;height:1px;background:#5d6570;opacity:0.71"></i><i style="left:695px;top:625px;width:1px;height:1px;background:#5d6570;opacity:0.80"></i><i style="left:682px;top:556px;width:1px;height:1px;background:#6f7f90;opacity:0.73"></i><i style="left:695px;top:541px;width:1px;height:1px;background:#8a8f98;opacity:0.31"></i><i style="left:692px;top:493px;width:1px;height:1px;background:#5d6570;opacity:0.78"></i><i style="left:713px;top:502px;width:1px;height:1px;background:#9a8878;opacity:0.42"></i><i style="left:760px;top:524px;width:1px;height:1px;background:#7a6a5a;opacity:0.62"></i><i style="left:686px;top:507px;width:1px;height:1px;background:#8aa0b8;opacity:0.44"></i><i style="left:709px;top:579px;width:1px;height:1px;background:#9a8878;opacity:0.74"></i><i style="left:739px;top:571px;width:1px;height:1px;background:#9a8878;opacity:0.55"></i><i style="left:715px;top:555px;width:1px;height:1px;background:#9a8878;opacity:0.80"></i><i style="left:683px;top:528px;width:1px;height:1px;background:#5d6570;opacity:0.79"></i><i style="left:717px;top:541px;width:1px;height:1px;background:#8a8f98;opacity:0.34"></i><i style="left:684px;top:493px;width:1px;height:1px;background:#6f7f90;opacity:0.40"></i><i style="left:739px;top:635px;width:1px;height:1px;background:#8a8f98;opacity:0.74"></i><i style="left:727px;top:647px;width:1px;height:1px;background:#4f6070;opacity:0.39"></i><i style="left:697px;top:491px;width:1px;height:1px;background:#5d6570;opacity:0.45"></i><i style="left:706px;top:503px;width:1px;height:1px;background:#5d6570;opacity:0.77"></i><i style="left:715px;top:601px;width:1px;height:1px;background:#8aa0b8;opacity:0.61"></i><i style="left:679px;top:574px;width:1px;height:1px;background:#5d6570;opacity:0.57"></i><i style="left:688px;top:565px;width:1px;height:1px;background:#7a6a5a;opacity:0.64"></i><i style="left:726px;top:482px;width:1px;height:1px;background:#4f6070;opacity:0.30"></i><i style="left:778px;top:508px;width:1px;height:1px;background:#4f6070;opacity:0.37"></i><i style="left:747px;top:540px;width:1px;height:1px;background:#6f7f90;opacity:0.61"></i><i style="left:729px;top:578px;width:1px;height:1px;background:#9a8878;opacity:0.35"></i><i style="left:716px;top:622px;width:1px;height:1px;background:#6f7f90;opacity:0.44"></i><i style="left:683px;top:579px;width:1px;height:1px;background:#7a6a5a;opacity:0.45"></i><i style="left:777px;top:580px;width:1px;height:1px;background:#6f7f90;opacity:0.65"></i><i style="left:687px;top:599px;width:1px;height:1px;background:#9a8878;opacity:0.68"></i><i style="left:762px;top:508px;width:1px;height:1px;background:#8aa0b8;opacity:0.58"></i><i style="left:750px;top:509px;width:1px;height:1px;background:#4f6070;opacity:0.66"></i><i style="left:710px;top:564px;width:1px;height:1px;background:#7a6a5a;opacity:0.53"></i><i style="left:716px;top:645px;width:1px;height:1px;background:#8a8f98;opacity:0.77"></i><i style="left:788px;top:635px;width:1px;height:1px;background:#7a6a5a;opacity:0.40"></i><i style="left:709px;top:547px;width:1px;height:1px;background:#5d6570;opacity:0.45"></i><i style="left:696px;top:518px;width:1px;height:1px;background:#5d6570;opacity:0.40"></i><i style="left:714px;top:565px;width:1px;height:1px;background:#7a6a5a;opacity:0.77"></i><i style="left:780px;top:636px;width:1px;height:1px;background:#9a8878;opacity:0.57"></i><i style="left:694px;top:554px;width:1px;height:1px;background:#4f6070;opacity:0.40"></i><i style="left:715px;top:607px;width:1px;height:1px;background:#4f6070;opacity:0.38"></i><i style="left:724px;top:522px;width:1px;height:1px;background:#9a8878;opacity:0.79"></i><i style="left:691px;top:497px;width:1px;height:1px;background:#4f6070;opacity:0.79"></i><i style="left:694px;top:535px;width:1px;height:1px;background:#8aa0b8;opacity:0.41"></i><i style="left:758px;top:483px;width:1px;height:1px;background:#5d6570;opacity:0.45"></i><i style="left:687px;top:482px;width:1px;height:1px;background:#9a8878;opacity:0.38"></i><i style="left:716px;top:622px;width:1px;height:1px;background:#8aa0b8;opacity:0.62"></i><i style="left:695px;top:553px;width:1px;height:1px;background:#5d6570;opacity:0.55"></i><i style="left:708px;top:594px;width:1px;height:1px;background:#8a8f98;opacity:0.62"></i><i style="left:678px;top:563px;width:1px;height:1px;background:#4f6070;opacity:0.58"></i><i style="left:713px;top:591px;width:1px;height:1px;background:#5d6570;opacity:0.75"></i><i style="left:679px;top:605px;width:1px;height:1px;background:#4f6070;opacity:0.48"></i><i style="left:741px;top:632px;width:1px;height:1px;background:#6f7f90;opacity:0.49"></i><i style="left:696px;top:530px;width:1px;height:1px;background:#7a6a5a;opacity:0.64"></i><i style="left:774px;top:507px;width:1px;height:1px;background:#9a8878;opacity:0.67"></i><i style="left:698px;top:648px;width:1px;height:1px;background:#6f7f90;opacity:0.39"></i><i style="left:749px;top:642px;width:1px;height:1px;background:#5d6570;opacity:0.41"></i><i style="left:685px;top:633px;width:1px;height:1px;background:#8aa0b8;opacity:0.60"></i><i style="left:708px;top:526px;width:1px;height:1px;background:#4f6070;opacity:0.48"></i><i style="left:684px;top:534px;width:1px;height:1px;background:#9a8878;opacity:0.71"></i><i style="left:732px;top:623px;width:1px;height:1px;background:#4f6070;opacity:0.58"></i><i style="left:773px;top:558px;width:1px;height:1px;background:#9a8878;opacity:0.71"></i><i style="left:720px;top:578px;width:1px;height:1px;background:#5d6570;opacity:0.67"></i><i style="left:705px;top:485px;width:1px;height:1px;background:#9a8878;opacity:0.78"></i><i style="left:699px;top:506px;width:1px;height:1px;background:#9a8878;opacity:0.62"></i><i style="left:778px;top:528px;width:1px;height:1px;background:#8a8f98;opacity:0.36"></i><i style="left:720px;top:599px;width:1px;height:1px;background:#7a6a5a;opacity:0.47"></i><i style="left:714px;top:643px;width:1px;height:1px;background:#8a8f98;opacity:0.68"></i><i style="left:725px;top:568px;width:1px;height:1px;background:#6f7f90;opacity:0.75"></i><i style="left:771px;top:568px;width:1px;height:1px;background:#9a8878;opacity:0.57"></i><i style="left:758px;top:613px;width:1px;height:1px;background:#8aa0b8;opacity:0.78"></i><i style="left:681px;top:637px;width:1px;height:1px;background:#7a6a5a;opacity:0.32"></i><i style="left:700px;top:619px;width:1px;height:1px;background:#4f6070;opacity:0.67"></i><i style="left:679px;top:590px;width:1px;height:1px;background:#4f6070;opacity:0.31"></i><i style="left:725px;top:501px;width:1px;height:1px;background:#9a8878;opacity:0.55"></i><i style="left:777px;top:590px;width:1px;height:1px;background:#8a8f98;opacity:0.48"></i><i style="left:716px;top:595px;width:1px;height:1px;background:#9a8878;opacity:0.34"></i><i style="left:772px;top:555px;width:1px;height:1px;background:#4f6070;opacity:0.42"></i><i style="left:721px;top:524px;width:1px;height:1px;background:#4f6070;opacity:0.63"></i><i style="left:684px;top:538px;width:1px;height:1px;background:#6f7f90;opacity:0.46"></i><i style="left:679px;top:495px;width:1px;height:1px;background:#8a8f98;opacity:0.42"></i><i style="left:896px;top:503px;width:1px;height:1px;background:#5d6570;opacity:0.50"></i><i style="left:830px;top:578px;width:1px;height:1px;background:#8a8f98;opacity:0.68"></i><i style="left:1162px;top:640px;width:1px;height:1px;background:#6f7f90;opacity:0.44"></i><i style="left:1159px;top:571px;width:1px;height:1px;background:#6f7f90;opacity:0.47"></i><i style="left:1163px;top:610px;width:1px;height:1px;background:#8a8f98;opacity:0.59"></i><i style="left:1043px;top:647px;width:1px;height:1px;background:#5d6570;opacity:0.45"></i><i style="left:716px;top:482px;width:1px;height:1px;background:#4f6070;opacity:0.56"></i><i style="left:939px;top:593px;width:1px;height:1px;background:#6f7f90;opacity:0.53"></i><i style="left:776px;top:643px;width:1px;height:1px;background:#9a8878;opacity:0.65"></i><i style="left:982px;top:581px;width:1px;height:1px;background:#6f7f90;opacity:0.63"></i><i style="left:858px;top:594px;width:1px;height:1px;background:#4f6070;opacity:0.27"></i><i style="left:815px;top:546px;width:1px;height:1px;background:#6f7f90;opacity:0.46"></i><i style="left:1255px;top:510px;width:1px;height:1px;background:#5d6570;opacity:0.37"></i><i style="left:1133px;top:646px;width:1px;height:1px;background:#9a8878;opacity:0.42"></i><i style="left:905px;top:594px;width:1px;height:1px;background:#9a8878;opacity:0.50"></i><i style="left:1181px;top:570px;width:1px;height:1px;background:#6f7f90;opacity:0.44"></i><i style="left:953px;top:555px;width:1px;height:1px;background:#7a6a5a;opacity:0.67"></i><i style="left:1064px;top:562px;width:1px;height:1px;background:#6f7f90;opacity:0.55"></i><i style="left:936px;top:500px;width:1px;height:1px;background:#8a8f98;opacity:0.33"></i><i style="left:1002px;top:598px;width:1px;height:1px;background:#5d6570;opacity:0.50"></i><i style="left:981px;top:540px;width:1px;height:1px;background:#9a8878;opacity:0.25"></i><i style="left:740px;top:542px;width:1px;height:1px;background:#4f6070;opacity:0.52"></i><i style="left:796px;top:569px;width:1px;height:1px;background:#8a8f98;opacity:0.34"></i><i style="left:1190px;top:517px;width:1px;height:1px;background:#5d6570;opacity:0.51"></i><i style="left:1247px;top:623px;width:1px;height:1px;background:#4f6070;opacity:0.48"></i><i style="left:1201px;top:592px;width:1px;height:1px;background:#7a6a5a;opacity:0.66"></i><i style="left:1267px;top:564px;width:1px;height:1px;background:#7a6a5a;opacity:0.36"></i><i style="left:811px;top:578px;width:1px;height:1px;background:#4f6070;opacity:0.69"></i><i style="left:1027px;top:616px;width:1px;height:1px;background:#7a6a5a;opacity:0.57"></i><i style="left:758px;top:530px;width:1px;height:1px;background:#9a8878;opacity:0.59"></i><i style="left:1155px;top:501px;width:1px;height:1px;background:#7a6a5a;opacity:0.57"></i><i style="left:1159px;top:533px;width:1px;height:1px;background:#4f6070;opacity:0.45"></i><i style="left:1108px;top:645px;width:1px;height:1px;background:#6f7f90;opacity:0.33"></i><i style="left:783px;top:514px;width:1px;height:1px;background:#6f7f90;opacity:0.48"></i><i style="left:766px;top:553px;width:1px;height:1px;background:#6f7f90;opacity:0.42"></i><i style="left:1018px;top:552px;width:1px;height:1px;background:#4f6070;opacity:0.33"></i><i style="left:720px;top:508px;width:1px;height:1px;background:#9a8878;opacity:0.64"></i><i style="left:1181px;top:507px;width:1px;height:1px;background:#9a8878;opacity:0.43"></i><i style="left:751px;top:581px;width:1px;height:1px;background:#5d6570;opacity:0.35"></i><i style="left:1229px;top:535px;width:1px;height:1px;background:#5d6570;opacity:0.44"></i><i style="left:1228px;top:600px;width:1px;height:1px;background:#8a8f98;opacity:0.44"></i><i style="left:985px;top:497px;width:1px;height:1px;background:#9a8878;opacity:0.32"></i><i style="left:929px;top:573px;width:1px;height:1px;background:#6f7f90;opacity:0.46"></i><i style="left:1291px;top:529px;width:1px;height:1px;background:#5d6570;opacity:0.60"></i><i style="left:878px;top:611px;width:1px;height:1px;background:#4f6070;opacity:0.38"></i><i style="left:977px;top:493px;width:1px;height:1px;background:#8a8f98;opacity:0.45"></i><i style="left:761px;top:537px;width:1px;height:1px;background:#7a6a5a;opacity:0.36"></i><i style="left:1204px;top:604px;width:1px;height:1px;background:#9a8878;opacity:0.65"></i><i style="left:904px;top:555px;width:1px;height:1px;background:#6f7f90;opacity:0.54"></i><i style="left:1064px;top:516px;width:1px;height:1px;background:#7a6a5a;opacity:0.38"></i><i style="left:715px;top:498px;width:1px;height:1px;background:#4f6070;opacity:0.32"></i><i style="left:718px;top:630px;width:1px;height:1px;background:#8a8f98;opacity:0.33"></i><i style="left:1114px;top:511px;width:1px;height:1px;background:#4f6070;opacity:0.52"></i><i style="left:1142px;top:485px;width:1px;height:1px;background:#4f6070;opacity:0.29"></i><i style="left:1065px;top:589px;width:1px;height:1px;background:#6f7f90;opacity:0.63"></i><i style="left:906px;top:598px;width:1px;height:1px;background:#4f6070;opacity:0.69"></i><i style="left:986px;top:624px;width:1px;height:1px;background:#4f6070;opacity:0.54"></i><i style="left:1001px;top:510px;width:1px;height:1px;background:#5d6570;opacity:0.47"></i><i style="left:1024px;top:601px;width:1px;height:1px;background:#8a8f98;opacity:0.43"></i><i style="left:1119px;top:493px;width:1px;height:1px;background:#4f6070;opacity:0.63"></i><i style="left:1228px;top:627px;width:1px;height:1px;background:#9a8878;opacity:0.30"></i><i style="left:1204px;top:641px;width:1px;height:1px;background:#7a6a5a;opacity:0.50"></i><i style="left:995px;top:637px;width:1px;height:1px;background:#7a6a5a;opacity:0.42"></i><i style="left:874px;top:639px;width:1px;height:1px;background:#5d6570;opacity:0.34"></i><i style="left:835px;top:559px;width:1px;height:1px;background:#4f6070;opacity:0.41"></i><i style="left:1059px;top:617px;width:1px;height:1px;background:#5d6570;opacity:0.69"></i><i style="left:855px;top:484px;width:1px;height:1px;background:#6f7f90;opacity:0.44"></i><i style="left:1028px;top:646px;width:1px;height:1px;background:#5d6570;opacity:0.52"></i><i style="left:892px;top:552px;width:1px;height:1px;background:#4f6070;opacity:0.32"></i><i style="left:1277px;top:565px;width:1px;height:1px;background:#4f6070;opacity:0.52"></i><i style="left:1234px;top:480px;width:1px;height:1px;background:#4f6070;opacity:0.35"></i><i style="left:1313px;top:526px;width:1px;height:1px;background:#4f6070;opacity:0.55"></i><i style="left:1001px;top:531px;width:1px;height:1px;background:#6f7f90;opacity:0.43"></i><i style="left:980px;top:635px;width:1px;height:1px;background:#7a6a5a;opacity:0.33"></i><i style="left:993px;top:560px;width:1px;height:1px;background:#9a8878;opacity:0.40"></i><i style="left:737px;top:616px;width:1px;height:1px;background:#5d6570;opacity:0.30"></i><i style="left:1193px;top:612px;width:1px;height:1px;background:#4f6070;opacity:0.44"></i><i style="left:1230px;top:632px;width:1px;height:1px;background:#7a6a5a;opacity:0.52"></i><i style="left:827px;top:519px;width:1px;height:1px;background:#9a8878;opacity:0.41"></i><i style="left:705px;top:481px;width:1px;height:1px;background:#9a8878;opacity:0.60"></i><i style="left:856px;top:583px;width:1px;height:1px;background:#6f7f90;opacity:0.48"></i><i style="left:837px;top:638px;width:1px;height:1px;background:#8a8f98;opacity:0.44"></i><i style="left:979px;top:617px;width:1px;height:1px;background:#5d6570;opacity:0.69"></i><i style="left:701px;top:516px;width:1px;height:1px;background:#4f6070;opacity:0.38"></i><i style="left:741px;top:574px;width:1px;height:1px;background:#8a8f98;opacity:0.28"></i><i style="left:1033px;top:512px;width:1px;height:1px;background:#5d6570;opacity:0.44"></i><i style="left:1297px;top:626px;width:1px;height:1px;background:#8a8f98;opacity:0.27"></i><i style="left:1324px;top:573px;width:1px;height:1px;background:#8a8f98;opacity:0.61"></i><i style="left:876px;top:549px;width:1px;height:1px;background:#9a8878;opacity:0.26"></i><i style="left:750px;top:558px;width:1px;height:1px;background:#7a6a5a;opacity:0.49"></i><i style="left:1218px;top:617px;width:1px;height:1px;background:#5d6570;opacity:0.58"></i><i style="left:906px;top:640px;width:1px;height:1px;background:#4f6070;opacity:0.30"></i><i style="left:921px;top:514px;width:1px;height:1px;background:#5d6570;opacity:0.39"></i><i style="left:1144px;top:534px;width:1px;height:1px;background:#5d6570;opacity:0.40"></i><i style="left:1002px;top:581px;width:1px;height:1px;background:#8a8f98;opacity:0.68"></i><i style="left:800px;top:596px;width:1px;height:1px;background:#6f7f90;opacity:0.56"></i><i style="left:836px;top:590px;width:1px;height:1px;background:#6f7f90;opacity:0.57"></i><i style="left:817px;top:485px;width:1px;height:1px;background:#4f6070;opacity:0.60"></i><i style="left:1148px;top:499px;width:1px;height:1px;background:#8a8f98;opacity:0.53"></i><i style="left:930px;top:592px;width:1px;height:1px;background:#9a8878;opacity:0.45"></i><i style="left:1283px;top:588px;width:1px;height:1px;background:#5d6570;opacity:0.69"></i><i style="left:999px;top:635px;width:1px;height:1px;background:#4f6070;opacity:0.41"></i><i style="left:707px;top:621px;width:1px;height:1px;background:#9a8878;opacity:0.60"></i><i style="left:1316px;top:584px;width:1px;height:1px;background:#6f7f90;opacity:0.63"></i><i style="left:1235px;top:618px;width:1px;height:1px;background:#5d6570;opacity:0.42"></i><i style="left:1219px;top:562px;width:1px;height:1px;background:#4f6070;opacity:0.65"></i><i style="left:1227px;top:620px;width:1px;height:1px;background:#6f7f90;opacity:0.64"></i><i style="left:814px;top:575px;width:1px;height:1px;background:#5d6570;opacity:0.62"></i><i style="left:1248px;top:550px;width:1px;height:1px;background:#6f7f90;opacity:0.62"></i><i style="left:1248px;top:565px;width:1px;height:1px;background:#4f6070;opacity:0.43"></i><i style="left:983px;top:570px;width:1px;height:1px;background:#7a6a5a;opacity:0.27"></i><i style="left:987px;top:529px;width:1px;height:1px;background:#6f7f90;opacity:0.49"></i><i style="left:760px;top:623px;width:1px;height:1px;background:#8a8f98;opacity:0.33"></i><i style="left:1244px;top:608px;width:1px;height:1px;background:#5d6570;opacity:0.65"></i><i style="left:1208px;top:535px;width:1px;height:1px;background:#9a8878;opacity:0.41"></i><i style="left:778px;top:561px;width:1px;height:1px;background:#8a8f98;opacity:0.40"></i><i style="left:1065px;top:579px;width:1px;height:1px;background:#6f7f90;opacity:0.41"></i><i style="left:1213px;top:514px;width:1px;height:1px;background:#5d6570;opacity:0.44"></i><i style="left:991px;top:507px;width:1px;height:1px;background:#5d6570;opacity:0.48"></i><i style="left:780px;top:600px;width:1px;height:1px;background:#6f7f90;opacity:0.61"></i><i style="left:1340px;top:486px;width:1px;height:1px;background:#9a8878;opacity:0.30"></i><i style="left:1228px;top:478px;width:1px;height:1px;background:#6f7f90;opacity:0.40"></i><i style="left:737px;top:529px;width:1px;height:1px;background:#9a8878;opacity:0.44"></i><i style="left:1047px;top:629px;width:1px;height:1px;background:#6f7f90;opacity:0.64"></i><i style="left:1331px;top:601px;width:1px;height:1px;background:#5d6570;opacity:0.31"></i><i style="left:979px;top:575px;width:1px;height:1px;background:#6f7f90;opacity:0.36"></i><i style="left:814px;top:482px;width:1px;height:1px;background:#8a8f98;opacity:0.26"></i><i style="left:802px;top:582px;width:1px;height:1px;background:#8a8f98;opacity:0.40"></i><i style="left:1221px;top:620px;width:1px;height:1px;background:#7a6a5a;opacity:0.30"></i><i style="left:878px;top:483px;width:1px;height:1px;background:#9a8878;opacity:0.60"></i><i style="left:1159px;top:598px;width:1px;height:1px;background:#7a6a5a;opacity:0.28"></i><i style="left:899px;top:533px;width:1px;height:1px;background:#6f7f90;opacity:0.68"></i><i style="left:1206px;top:559px;width:1px;height:1px;background:#4f6070;opacity:0.60"></i><i style="left:888px;top:546px;width:1px;height:1px;background:#5d6570;opacity:0.42"></i><i style="left:925px;top:569px;width:1px;height:1px;background:#6f7f90;opacity:0.47"></i><i style="left:1115px;top:525px;width:1px;height:1px;background:#6f7f90;opacity:0.59"></i><i style="left:1210px;top:574px;width:1px;height:1px;background:#4f6070;opacity:0.67"></i><i style="left:1314px;top:529px;width:1px;height:1px;background:#8a8f98;opacity:0.54"></i><i style="left:941px;top:567px;width:1px;height:1px;background:#7a6a5a;opacity:0.28"></i><i style="left:706px;top:595px;width:1px;height:1px;background:#4f6070;opacity:0.66"></i><i style="left:1195px;top:542px;width:1px;height:1px;background:#4f6070;opacity:0.42"></i><i style="left:968px;top:582px;width:1px;height:1px;background:#9a8878;opacity:0.45"></i><i style="left:962px;top:495px;width:1px;height:1px;background:#9a8878;opacity:0.33"></i><i style="left:1195px;top:588px;width:1px;height:1px;background:#8a8f98;opacity:0.61"></i><i style="left:1041px;top:515px;width:1px;height:1px;background:#9a8878;opacity:0.30"></i><i style="left:758px;top:616px;width:1px;height:1px;background:#9a8878;opacity:0.51"></i><i style="left:1023px;top:589px;width:1px;height:1px;background:#8a8f98;opacity:0.46"></i><i style="left:794px;top:622px;width:1px;height:1px;background:#4f6070;opacity:0.44"></i><i style="left:1276px;top:505px;width:1px;height:1px;background:#8a8f98;opacity:0.26"></i><i style="left:1091px;top:525px;width:1px;height:1px;background:#4f6070;opacity:0.30"></i><i style="left:848px;top:623px;width:1px;height:1px;background:#5d6570;opacity:0.60"></i><i style="left:851px;top:510px;width:1px;height:1px;background:#5d6570;opacity:0.39"></i><i style="left:771px;top:620px;width:1px;height:1px;background:#4f6070;opacity:0.47"></i><i style="left:1234px;top:647px;width:1px;height:1px;background:#9a8878;opacity:0.43"></i><i style="left:1005px;top:584px;width:1px;height:1px;background:#8a8f98;opacity:0.59"></i><i style="left:1079px;top:538px;width:1px;height:1px;background:#5d6570;opacity:0.40"></i><i style="left:792px;top:485px;width:1px;height:1px;background:#7a6a5a;opacity:0.59"></i><i style="left:817px;top:629px;width:1px;height:1px;background:#6f7f90;opacity:0.60"></i><i style="left:879px;top:624px;width:1px;height:1px;background:#5d6570;opacity:0.62"></i><i style="left:844px;top:638px;width:1px;height:1px;background:#7a6a5a;opacity:0.28"></i><i style="left:1269px;top:586px;width:1px;height:1px;background:#5d6570;opacity:0.42"></i><i style="left:1275px;top:527px;width:1px;height:1px;background:#6f7f90;opacity:0.41"></i><i style="left:1266px;top:481px;width:1px;height:1px;background:#5d6570;opacity:0.25"></i><i style="left:955px;top:599px;width:1px;height:1px;background:#7a6a5a;opacity:0.50"></i><i style="left:841px;top:601px;width:1px;height:1px;background:#9a8878;opacity:0.69"></i><i style="left:1253px;top:580px;width:1px;height:1px;background:#9a8878;opacity:0.35"></i><i style="left:1101px;top:575px;width:1px;height:1px;background:#4f6070;opacity:0.48"></i><i style="left:981px;top:544px;width:1px;height:1px;background:#6f7f90;opacity:0.35"></i><i style="left:1074px;top:480px;width:1px;height:1px;background:#5d6570;opacity:0.53"></i><i style="left:923px;top:520px;width:1px;height:1px;background:#8a8f98;opacity:0.52"></i><i style="left:1301px;top:540px;width:1px;height:1px;background:#9a8878;opacity:0.67"></i><i style="left:828px;top:540px;width:1px;height:1px;background:#6f7f90;opacity:0.35"></i><i style="left:1192px;top:519px;width:1px;height:1px;background:#6f7f90;opacity:0.42"></i><i style="left:1312px;top:597px;width:1px;height:1px;background:#4f6070;opacity:0.35"></i><i style="left:923px;top:527px;width:1px;height:1px;background:#8a8f98;opacity:0.50"></i><i style="left:751px;top:536px;width:1px;height:1px;background:#8a8f98;opacity:0.67"></i><i style="left:1268px;top:543px;width:1px;height:1px;background:#7a6a5a;opacity:0.59"></i><i style="left:1216px;top:579px;width:1px;height:1px;background:#5d6570;opacity:0.68"></i><i style="left:750px;top:555px;width:1px;height:1px;background:#6f7f90;opacity:0.25"></i><i style="left:1076px;top:523px;width:1px;height:1px;background:#8a8f98;opacity:0.62"></i><i style="left:1266px;top:611px;width:1px;height:1px;background:#6f7f90;opacity:0.39"></i><i style="left:1169px;top:605px;width:1px;height:1px;background:#8a8f98;opacity:0.34"></i><i style="left:1003px;top:550px;width:1px;height:1px;background:#9a8878;opacity:0.57"></i><i style="left:957px;top:628px;width:1px;height:1px;background:#6f7f90;opacity:0.32"></i><i style="left:1142px;top:553px;width:1px;height:1px;background:#9a8878;opacity:0.32"></i><i style="left:928px;top:495px;width:1px;height:1px;background:#7a6a5a;opacity:0.44"></i><i style="left:823px;top:622px;width:1px;height:1px;background:#4f6070;opacity:0.53"></i><i style="left:914px;top:592px;width:1px;height:1px;background:#8a8f98;opacity:0.25"></i><i style="left:751px;top:628px;width:1px;height:1px;background:#9a8878;opacity:0.62"></i><i style="left:1229px;top:628px;width:1px;height:1px;background:#7a6a5a;opacity:0.54"></i><i style="left:1243px;top:551px;width:1px;height:1px;background:#9a8878;opacity:0.39"></i><i style="left:1238px;top:510px;width:1px;height:1px;background:#6f7f90;opacity:0.45"></i><i style="left:789px;top:626px;width:1px;height:1px;background:#9a8878;opacity:0.37"></i><i style="left:1295px;top:603px;width:1px;height:1px;background:#5d6570;opacity:0.59"></i><i style="left:768px;top:637px;width:1px;height:1px;background:#8a8f98;opacity:0.47"></i><i style="left:901px;top:571px;width:1px;height:1px;background:#4f6070;opacity:0.54"></i><i style="left:759px;top:497px;width:1px;height:1px;background:#6f7f90;opacity:0.42"></i><i style="left:865px;top:590px;width:1px;height:1px;background:#7a6a5a;opacity:0.59"></i><i style="left:1135px;top:564px;width:1px;height:1px;background:#6f7f90;opacity:0.69"></i><i style="left:897px;top:610px;width:1px;height:1px;background:#4f6070;opacity:0.61"></i><i style="left:828px;top:548px;width:1px;height:1px;background:#9a8878;opacity:0.55"></i><i style="left:1280px;top:589px;width:1px;height:1px;background:#4f6070;opacity:0.70"></i><i style="left:854px;top:614px;width:1px;height:1px;background:#7a6a5a;opacity:0.42"></i><i style="left:900px;top:616px;width:1px;height:1px;background:#4f6070;opacity:0.69"></i><i style="left:913px;top:630px;width:1px;height:1px;background:#5d6570;opacity:0.26"></i><i style="left:1051px;top:494px;width:1px;height:1px;background:#6f7f90;opacity:0.46"></i><i style="left:1239px;top:589px;width:1px;height:1px;background:#5d6570;opacity:0.68"></i><i style="left:888px;top:501px;width:1px;height:1px;background:#8a8f98;opacity:0.63"></i><i style="left:775px;top:534px;width:1px;height:1px;background:#8a8f98;opacity:0.39"></i><i style="left:964px;top:549px;width:1px;height:1px;background:#8a8f98;opacity:0.61"></i><i style="left:740px;top:534px;width:1px;height:1px;background:#4f6070;opacity:0.32"></i><i style="left:1107px;top:642px;width:1px;height:1px;background:#9a8878;opacity:0.32"></i><i style="left:704px;top:553px;width:1px;height:1px;background:#9a8878;opacity:0.49"></i><i style="left:716px;top:637px;width:1px;height:1px;background:#7a6a5a;opacity:0.54"></i><i style="left:1115px;top:603px;width:1px;height:1px;background:#9a8878;opacity:0.46"></i><i style="left:754px;top:636px;width:1px;height:1px;background:#6f7f90;opacity:0.64"></i><i style="left:1212px;top:506px;width:1px;height:1px;background:#5d6570;opacity:0.35"></i><i style="left:1114px;top:540px;width:1px;height:1px;background:#7a6a5a;opacity:0.42"></i><i style="left:1270px;top:623px;width:1px;height:1px;background:#7a6a5a;opacity:0.37"></i><i style="left:1330px;top:632px;width:1px;height:1px;background:#4f6070;opacity:0.55"></i><i style="left:1340px;top:359px;width:1px;height:1px;background:#9a8878;opacity:0.21"></i><i style="left:1294px;top:118px;width:1px;height:1px;background:#8a8f98;opacity:0.43"></i><i style="left:1304px;top:67px;width:1px;height:1px;background:#6f7f90;opacity:0.22"></i><i style="left:1308px;top:365px;width:1px;height:1px;background:#8a8f98;opacity:0.57"></i><i style="left:1319px;top:195px;width:1px;height:1px;background:#8a8f98;opacity:0.25"></i><i style="left:1330px;top:154px;width:1px;height:1px;background:#4f6070;opacity:0.41"></i><i style="left:1328px;top:352px;width:1px;height:1px;background:#8a8f98;opacity:0.31"></i><i style="left:1334px;top:160px;width:1px;height:1px;background:#4f6070;opacity:0.49"></i><i style="left:1331px;top:85px;width:1px;height:1px;background:#4f6070;opacity:0.38"></i><i style="left:1295px;top:268px;width:1px;height:1px;background:#9a8878;opacity:0.28"></i><i style="left:1294px;top:94px;width:1px;height:1px;background:#5d6570;opacity:0.36"></i><i style="left:1308px;top:379px;width:1px;height:1px;background:#7a6a5a;opacity:0.30"></i><i style="left:1320px;top:264px;width:1px;height:1px;background:#7a6a5a;opacity:0.43"></i><i style="left:1334px;top:163px;width:1px;height:1px;background:#6f7f90;opacity:0.26"></i><i style="left:1331px;top:173px;width:1px;height:1px;background:#4f6070;opacity:0.50"></i><i style="left:1330px;top:191px;width:1px;height:1px;background:#7a6a5a;opacity:0.22"></i><i style="left:1304px;top:89px;width:1px;height:1px;background:#5d6570;opacity:0.29"></i><i style="left:1308px;top:177px;width:1px;height:1px;background:#7a6a5a;opacity:0.53"></i><i style="left:1302px;top:356px;width:1px;height:1px;background:#6f7f90;opacity:0.43"></i><i style="left:1294px;top:308px;width:1px;height:1px;background:#5d6570;opacity:0.42"></i><i style="left:1329px;top:201px;width:1px;height:1px;background:#6f7f90;opacity:0.37"></i><i style="left:1333px;top:425px;width:1px;height:1px;background:#7a6a5a;opacity:0.22"></i><i style="left:1305px;top:355px;width:1px;height:1px;background:#8a8f98;opacity:0.59"></i><i style="left:1338px;top:254px;width:1px;height:1px;background:#4f6070;opacity:0.49"></i><i style="left:1332px;top:180px;width:1px;height:1px;background:#7a6a5a;opacity:0.21"></i><i style="left:1293px;top:414px;width:1px;height:1px;background:#4f6070;opacity:0.45"></i><i style="left:1312px;top:137px;width:1px;height:1px;background:#9a8878;opacity:0.25"></i><i style="left:1316px;top:239px;width:1px;height:1px;background:#9a8878;opacity:0.28"></i><i style="left:1297px;top:423px;width:1px;height:1px;background:#8a8f98;opacity:0.57"></i><i style="left:1314px;top:170px;width:1px;height:1px;background:#6f7f90;opacity:0.54"></i><i style="left:1337px;top:121px;width:1px;height:1px;background:#6f7f90;opacity:0.34"></i><i style="left:1328px;top:420px;width:1px;height:1px;background:#9a8878;opacity:0.47"></i><i style="left:1312px;top:160px;width:1px;height:1px;background:#5d6570;opacity:0.52"></i><i style="left:1297px;top:60px;width:1px;height:1px;background:#9a8878;opacity:0.39"></i><i style="left:1313px;top:380px;width:1px;height:1px;background:#7a6a5a;opacity:0.35"></i><i style="left:1332px;top:84px;width:1px;height:1px;background:#9a8878;opacity:0.36"></i><i style="left:1303px;top:209px;width:1px;height:1px;background:#9a8878;opacity:0.56"></i><i style="left:1315px;top:383px;width:1px;height:1px;background:#5d6570;opacity:0.32"></i><i style="left:1329px;top:294px;width:1px;height:1px;background:#7a6a5a;opacity:0.23"></i><i style="left:1312px;top:161px;width:1px;height:1px;background:#6f7f90;opacity:0.26"></i><i style="left:1326px;top:268px;width:1px;height:1px;background:#8a8f98;opacity:0.32"></i><i style="left:1335px;top:98px;width:1px;height:1px;background:#9a8878;opacity:0.35"></i><i style="left:1321px;top:292px;width:1px;height:1px;background:#7a6a5a;opacity:0.29"></i><i style="left:1338px;top:416px;width:1px;height:1px;background:#9a8878;opacity:0.48"></i><i style="left:1325px;top:174px;width:1px;height:1px;background:#8a8f98;opacity:0.48"></i><i style="left:1301px;top:398px;width:1px;height:1px;background:#9a8878;opacity:0.53"></i><i style="left:1330px;top:455px;width:1px;height:1px;background:#7a6a5a;opacity:0.37"></i><i style="left:1298px;top:265px;width:1px;height:1px;background:#7a6a5a;opacity:0.42"></i><i style="left:1318px;top:176px;width:1px;height:1px;background:#5d6570;opacity:0.47"></i><i style="left:1312px;top:457px;width:1px;height:1px;background:#8a8f98;opacity:0.26"></i><i style="left:1337px;top:53px;width:1px;height:1px;background:#5d6570;opacity:0.43"></i><i style="left:1299px;top:138px;width:1px;height:1px;background:#6f7f90;opacity:0.59"></i><i style="left:1326px;top:315px;width:1px;height:1px;background:#8a8f98;opacity:0.30"></i><i style="left:1302px;top:355px;width:1px;height:1px;background:#8a8f98;opacity:0.22"></i><i style="left:1300px;top:166px;width:1px;height:1px;background:#6f7f90;opacity:0.48"></i><i style="left:1341px;top:167px;width:1px;height:1px;background:#7a6a5a;opacity:0.30"></i><i style="left:1301px;top:226px;width:1px;height:1px;background:#5d6570;opacity:0.22"></i><i style="left:1311px;top:396px;width:1px;height:1px;background:#9a8878;opacity:0.54"></i><i style="left:1335px;top:189px;width:1px;height:1px;background:#8a8f98;opacity:0.22"></i><i style="left:1336px;top:207px;width:1px;height:1px;background:#9a8878;opacity:0.28"></i><i style="left:1305px;top:274px;width:1px;height:1px;background:#6f7f90;opacity:0.40"></i><i style="left:1298px;top:266px;width:1px;height:1px;background:#5d6570;opacity:0.53"></i><i style="left:1316px;top:195px;width:1px;height:1px;background:#8a8f98;opacity:0.48"></i><i style="left:1337px;top:274px;width:1px;height:1px;background:#5d6570;opacity:0.42"></i><i style="left:1307px;top:96px;width:1px;height:1px;background:#8a8f98;opacity:0.47"></i><i style="left:1315px;top:395px;width:1px;height:1px;background:#8a8f98;opacity:0.50"></i><i style="left:1329px;top:47px;width:1px;height:1px;background:#6f7f90;opacity:0.27"></i><i style="left:1317px;top:352px;width:1px;height:1px;background:#9a8878;opacity:0.47"></i><i style="left:1311px;top:465px;width:1px;height:1px;background:#6f7f90;opacity:0.55"></i><i style="left:1340px;top:395px;width:1px;height:1px;background:#9a8878;opacity:0.57"></i><i class="g" style="left:703.2px;top:541.0px;width:19.6px;height:14.0px;background:radial-gradient(closest-side,#d8481c,transparent);opacity:0.95;transform:rotate(0deg)"></i><i class="g" style="left:934.1px;top:499.6px;width:9.8px;height:16.8px;background:radial-gradient(closest-side,#b03a28,transparent);opacity:0.8;transform:rotate(10deg)"></i><i class="g" style="left:876.6px;top:476.4px;width:16.8px;height:11.2px;background:radial-gradient(closest-side,#8a3a20,transparent);opacity:0.6;transform:rotate(0deg)"></i><i class="g" style="left:765.5px;top:603.4px;width:5.0px;height:11.2px;background:radial-gradient(closest-side,#d02a1a,transparent);opacity:0.95;transform:rotate(0deg)"></i><i class="g" style="left:1312.4px;top:126.4px;width:7.3px;height:7.3px;background:radial-gradient(closest-side,#ff5030,transparent);opacity:1;transform:rotate(0deg)"></i><i class="g" style="left:1290.6px;top:190.2px;width:16.8px;height:5.6px;background:radial-gradient(closest-side,#a83a34,transparent);opacity:0.85;transform:rotate(25deg)"></i><i class="g" style="left:1314.9px;top:199.9px;width:4.2px;height:4.2px;background:radial-gradient(closest-side,#b04030,transparent);opacity:0.8;transform:rotate(0deg)"></i><i class="g" style="left:1140.8px;top:517.8px;width:4.5px;height:4.5px;background:radial-gradient(closest-side,#e03010,transparent);opacity:1;transform:rotate(0deg)"></i><i class="g" style="left:1163.6px;top:542.8px;width:16.8px;height:8.4px;background:radial-gradient(closest-side,#b04a20,transparent);opacity:0.85;transform:rotate(30deg)"></i><i class="g" style="left:1203.8px;top:547.6px;width:4.5px;height:6.7px;background:radial-gradient(closest-side,#ffb040,transparent);opacity:1;transform:rotate(0deg)"></i><i class="g" style="left:1040.2px;top:512.8px;width:5.6px;height:8.4px;background:radial-gradient(closest-side,#70605a,transparent);opacity:0.8;transform:rotate(0deg)"></i><i class="g" style="left:1153.9px;top:528.9px;width:4.2px;height:4.2px;background:radial-gradient(closest-side,#d0d0d8,transparent);opacity:0.9;transform:rotate(0deg)"></i><i class="g" style="left:726.9px;top:546.9px;width:4.2px;height:4.2px;background:radial-gradient(closest-side,#f0e0b0,transparent);opacity:0.95;transform:rotate(0deg)"></i><i class="g" style="left:809.9px;top:538.5px;width:4.2px;height:7.0px;background:radial-gradient(closest-side,#707880,transparent);opacity:0.8;transform:rotate(20deg)"></i><i class="g" style="left:997.8px;top:548.2px;width:8.4px;height:5.6px;background:radial-gradient(closest-side,#705040,transparent);opacity:0.7;transform:rotate(0deg)"></i><i class="g" style="left:1294.2px;top:235.2px;width:3.6px;height:3.6px;background:radial-gradient(closest-side,#8090c0,transparent);opacity:0.8;transform:rotate(0deg)"></i><i class="g" style="left:1306.2px;top:231.2px;width:3.6px;height:3.6px;background:radial-gradient(closest-side,#7080b0,transparent);opacity:0.8;transform:rotate(0deg)"></i><i class="g" style="left:774.3px;top:561.3px;width:3.4px;height:3.4px;background:radial-gradient(closest-side,#7090a0,transparent);opacity:0.8;transform:rotate(0deg)"></i><i class="g" style="left:1228.3px;top:497.2px;width:3.4px;height:5.6px;background:radial-gradient(closest-side,#8a7a70,transparent);opacity:0.6;transform:rotate(0deg)"></i><i class="g" style="left:688.2px;top:518.2px;width:3.6px;height:3.6px;background:radial-gradient(closest-side,#e0a070,transparent);opacity:0.8;transform:rotate(0deg)"></i><i class="g" style="left:743.2px;top:510.2px;width:3.6px;height:3.6px;background:radial-gradient(closest-side,#e08050,transparent);opacity:0.8;transform:rotate(0deg)"></i><i style="left:657px;top:25px;width:4px;height:160px;background:linear-gradient(#3f4449,#585c60 40%,#8b8b89)"></i></div></div>
<div class="win" style="left:25px;top:25px;z-index:1;height:455px">
<div class="tb"><svg class="wicon" width="14" height="12" viewBox="0 0 14 12"><rect x="0.5" y="0.5" width="13" height="11" fill="#fdfdfc" stroke="#8c8a86"/><rect x="2" y="4" width="10" height="6" fill="#dfe1dc"/><rect x="0" y="0" width="14" height="3" fill="#3465a4"/><rect x="1" y="1" width="12" height="1" fill="#6d93c8"/></svg><span class="tt">MIDAS_01 graph_0</span><div class="wbs"><span class="wb"><svg width="18" height="18" viewBox="0 0 18 18"><rect x="4" y="12" width="10" height="2" fill="#5e5e5c"/></svg></span><span class="wb"><svg width="18" height="18" viewBox="0 0 18 18"><path d="M4.5 5.5h9v8h-9z" fill="none" stroke="#5e5e5c"/><rect x="4" y="4" width="10" height="2" fill="#5e5e5c"/></svg></span><span class="wb"><svg width="18" height="18" viewBox="0 0 18 18"><path d="M4.5 4.5l9 9M13.5 4.5l-9 9" stroke="#5e5e5c" stroke-width="1.8" fill="none"/></svg></span></div></div>
<div class="client"><svg class="plot" width="625" height="424" viewBox="0 0 625 424">
<defs><clipPath id="cpa"><rect x="94.5" y="21.5" width="405" height="361"/></clipPath></defs>
<path d="M94.5 21.5h405v361h-405zM111.5 21.5v5M111.5 382.5v-5M128.5 21.5v5M128.5 382.5v-5M145.5 21.5v5M145.5 382.5v-5M162.5 21.5v8M162.5 382.5v-8M178.5 21.5v5M178.5 382.5v-5M195.5 21.5v5M195.5 382.5v-5M212.5 21.5v5M212.5 382.5v-5M229.5 21.5v8M229.5 382.5v-8M246.5 21.5v5M246.5 382.5v-5M263.5 21.5v5M263.5 382.5v-5M280.5 21.5v5M280.5 382.5v-5M296.5 21.5v8M296.5 382.5v-8M313.5 21.5v5M313.5 382.5v-5M330.5 21.5v5M330.5 382.5v-5M347.5 21.5v5M347.5 382.5v-5M364.5 21.5v8M364.5 382.5v-8M381.5 21.5v5M381.5 382.5v-5M398.5 21.5v5M398.5 382.5v-5M415.5 21.5v5M415.5 382.5v-5M432.5 21.5v8M432.5 382.5v-8M448.5 21.5v5M448.5 382.5v-5M465.5 21.5v5M465.5 382.5v-5M482.5 21.5v5M482.5 382.5v-5M94.5 366.5h5M499.5 366.5h-5M94.5 349.5h8M499.5 349.5h-8M94.5 333.5h5M499.5 333.5h-5M94.5 316.5h5M499.5 316.5h-5M94.5 300.5h5M499.5 300.5h-5M94.5 284.5h8M499.5 284.5h-8M94.5 267.5h5M499.5 267.5h-5M94.5 251.5h5M499.5 251.5h-5M94.5 234.5h5M499.5 234.5h-5M94.5 218.5h8M499.5 218.5h-8M94.5 202.5h5M499.5 202.5h-5M94.5 185.5h5M499.5 185.5h-5M94.5 169.5h5M499.5 169.5h-5M94.5 152.5h8M499.5 152.5h-8M94.5 136.5h5M499.5 136.5h-5M94.5 119.5h5M499.5 119.5h-5M94.5 103.5h5M499.5 103.5h-5M94.5 87.5h8M499.5 87.5h-8M94.5 70.5h5M499.5 70.5h-5M94.5 54.5h5M499.5 54.5h-5M94.5 37.5h5M499.5 37.5h-5" fill="none" stroke="#000" stroke-width="1" shape-rendering="crispEdges"/>
<g font-family="Liberation Mono, DejaVu Sans Mono, monospace" font-size="13.2" letter-spacing="0.48" fill="#000">
<text x="86.5" y="26.1" text-anchor="end">1.2</text>
<text x="86.5" y="91.7" text-anchor="end">1</text>
<text x="86.5" y="157.4" text-anchor="end">0.8</text>
<text x="86.5" y="223.0" text-anchor="end">0.6</text>
<text x="86.5" y="288.6" text-anchor="end">0.4</text>
<text x="86.5" y="354.3" text-anchor="end">0.2</text>
<text x="93.7" y="398.8" text-anchor="middle">5800</text>
<text x="161.2" y="398.8" text-anchor="middle">5820</text>
<text x="228.7" y="398.8" text-anchor="middle">5840</text>
<text x="296.2" y="398.8" text-anchor="middle">5860</text>
<text x="363.7" y="398.8" text-anchor="middle">5880</text>
<text x="431.2" y="398.8" text-anchor="middle">5900</text>
<text x="498.7" y="398.8" text-anchor="middle">5920</text>
<text x="297.0" y="416.1" text-anchor="middle">Position (WAVELENGTH)</text>
<text transform="translate(49 202.0) rotate(-90)" text-anchor="middle">Pixel value (FLUX )</text>
</g>
<polyline clip-path="url(#cpa)" points="94.5,18.0 97.6,14.7 101.5,8.1 104.5,14.1 109.2,15.4 113.0,8.8 118.4,19.3 122.2,9.4 126.8,14.7 129.9,10.1 133.8,17.3 138.4,13.4 140.7,24.6 145.3,12.1 148.4,11.4 150.7,17.3 154.5,11.4 156.8,16.7 159.2,12.7 160.7,18.7 163.0,13.4 165.3,16.7 166.5,17.7 167.1,17.4 167.6,15.0 168.2,13.3 168.8,13.9 169.3,16.4 169.9,17.6 170.4,16.3 171.0,15.2 171.6,15.0 172.1,14.7 172.7,16.3 173.2,19.2 173.8,20.4 174.4,19.5 174.9,22.0 175.5,21.3 176.1,23.8 176.6,23.1 177.2,20.6 177.8,17.5 178.3,14.5 178.9,14.1 179.4,16.8 180.0,18.5 180.6,19.4 181.1,18.5 181.7,14.3 182.2,15.1 182.8,15.8 183.4,18.3 183.9,17.5 184.5,17.4 185.1,15.5 185.6,15.1 186.2,16.6 186.7,19.8 187.3,22.5 187.9,23.0 188.4,22.1 189.0,18.4 189.6,19.2 190.1,19.2 190.7,21.3 191.3,18.1 191.8,15.4 192.4,13.2 192.9,15.3 193.5,18.8 194.1,22.0 194.6,20.4 195.2,15.3 195.8,13.2 196.3,14.7 196.9,19.3 197.4,22.9 198.0,24.3 198.6,21.9 199.1,20.9 199.7,21.0 200.2,21.4 200.8,22.7 201.4,22.2 201.9,18.0 202.5,16.2 203.1,15.7 203.6,19.5 204.2,21.4 204.8,20.5 205.3,19.5 205.9,16.6 206.4,16.4 207.0,18.8 207.6,21.7 208.1,21.1 208.7,20.5 209.2,16.8 209.8,16.0 210.4,20.1 210.9,24.7 211.5,29.1 212.1,29.6 212.6,28.1 213.2,25.9 213.7,25.0 214.3,24.3 214.9,23.0 215.4,20.9 216.0,18.6 216.6,18.3 217.1,20.3 217.7,21.5 218.3,21.9 218.8,21.5 219.4,19.0 219.9,18.2 220.5,19.5 221.1,22.5 221.6,22.7 222.2,22.3 222.8,19.7 223.3,19.3 223.9,18.9 224.4,22.6 225.0,23.5 225.6,23.2 226.1,20.3 226.7,18.7 227.2,19.2 227.8,22.8 228.4,25.3 228.9,25.2 229.5,20.4 230.1,18.4 230.6,19.5 231.2,21.5 231.8,24.8 232.3,25.0 232.9,22.5 233.4,20.3 234.0,19.4 234.6,22.3 235.1,25.8 235.7,25.6 236.2,26.5 236.8,25.8 237.4,28.4 237.9,29.9 238.5,30.2 239.1,28.1 239.6,24.9 240.2,21.0 240.7,19.0 241.3,22.5 241.9,25.5 242.4,27.5 243.0,26.0 243.6,21.4 244.1,20.5 244.7,22.2 245.3,25.5 245.8,27.7 246.4,26.0 246.9,22.1 247.5,21.2 248.1,22.0 248.6,25.5 249.2,27.8 249.8,26.3 250.3,24.6 250.9,23.9 251.4,22.1 252.0,25.7 252.6,26.0 253.1,25.5 253.7,24.6 254.2,23.5 254.8,23.4 255.4,24.5 255.9,27.6 256.5,25.9 257.1,25.6 257.6,22.4 258.2,23.5 258.8,26.3 259.3,28.2 259.9,28.1 260.4,25.3 261.0,23.7 261.6,25.2 262.1,26.5 262.7,28.2 263.2,28.6 263.8,26.4 264.4,24.0 264.9,22.7 265.5,26.3 266.1,28.4 266.6,28.9 267.2,27.2 267.7,24.7 268.3,25.7 268.9,27.3 269.4,29.1 270.0,29.7 270.6,26.9 271.1,26.7 271.7,26.1 272.3,26.9 272.8,29.3 273.4,31.0 273.9,30.2 274.5,26.7 275.1,25.9 275.6,26.8 276.2,32.8 276.8,36.2 277.3,37.8 277.9,33.1 278.4,29.2 279.0,29.6 279.6,33.0 280.1,33.8 280.7,32.0 281.2,27.4 281.8,26.3 282.4,27.4 282.9,29.9 283.5,31.9 284.1,31.7 284.6,29.1 285.2,27.1 285.8,29.6 286.3,30.3 286.9,33.2 287.4,32.0 288.0,30.2 288.6,29.1 289.1,28.8 289.7,31.3 290.2,32.9 290.8,33.0 291.4,31.7 291.9,28.5 292.5,28.4 293.1,31.7 293.6,34.5 294.2,33.1 294.7,31.9 295.3,29.4 295.9,28.8 296.4,30.9 297.0,33.8 297.6,34.5 298.1,32.4 298.7,30.8 299.3,31.3 299.8,30.9 300.4,32.6 300.9,34.2 301.5,32.4 302.1,32.3 302.6,31.5 303.2,32.4 303.8,35.0 304.3,38.3 304.9,38.8 305.4,37.7 306.0,36.1 306.6,36.3 307.1,36.3 307.7,36.9 308.2,35.8 308.8,31.3 309.4,29.6 309.9,32.1 310.5,33.4 311.1,36.5 311.6,35.9 312.2,32.7 312.8,29.6 313.3,30.8 313.9,34.4 314.4,37.4 315.0,37.6 315.6,34.1 316.1,32.0 316.7,30.5 317.2,34.0 317.8,36.0 318.4,36.3 318.9,32.9 319.5,31.0 320.1,32.2 320.6,34.4 321.2,35.4 321.7,36.4 322.3,34.7 322.9,32.3 323.4,30.9 324.0,33.1 324.6,36.5 325.1,38.0 325.7,34.9 326.3,32.4 326.8,30.2 327.4,32.8 327.9,37.3 328.5,38.4 329.1,35.1 329.6,32.7 330.2,33.0 330.8,36.9 331.3,42.6 331.9,43.1 332.4,40.9 333.0,33.6 335.5,41.6 339.2,34.7 341.7,37.8 344.8,32.0 346.7,37.3 348.6,51.1 349.6,62.9 350.4,71.4 351.7,66.1 352.9,54.3 353.9,46.9 355.4,38.4 357.6,32.0 359.8,38.9 362.9,41.0 365.1,35.2 367.6,44.2 369.7,36.8 372.2,40.0 374.7,45.3 375.9,38.9 377.8,44.2 380.0,38.4 382.2,47.4 384.6,51.1 386.8,41.0 389.6,53.8 391.5,43.2 393.4,37.3 395.2,48.0 396.2,51.1 396.9,88.7 397.3,140.0 397.6,242.7 398.6,282.0 399.3,241.8 400.2,164.0 400.9,140.0 401.2,88.7 402.0,51.1 403.9,61.8 404.9,51.1 407.7,48.0 412.0,35.7 415.1,46.9 416.6,53.3 417.4,83.6 417.9,140.0 418.2,181.1 418.9,236.2 419.9,181.1 420.6,140.0 421.2,84.4 421.6,52.2 422.9,43.7 425.7,56.5 426.3,48.0 428.2,44.2 430.4,38.9 432.2,57.5 434.1,38.9 435.7,49.0 437.3,65.0 438.8,48.0 441.3,45.8 442.5,48.0 446.9,38.4 448.7,42.6 450.0,47.4 454.3,37.3 457.5,41.6 461.2,44.2 463.1,48.0 464.7,43.2 468.0,50.1 469.9,41.6 474.3,36.2 476.1,46.4 478.0,40.5 480.5,46.9 482.3,48.0 484.6,52.7 486.7,44.8 489.2,42.1 492.7,39.4 494.8,52.7 497.3,54.3 499.1,55.9" fill="none" stroke="#000" stroke-width="1" stroke-linejoin="miter" shape-rendering="crispEdges"/>
<path d="M507.5 21.5h116v43h-116zM538.5 21.5v43" fill="none" stroke="#000" shape-rendering="crispEdges"/>
<g font-family="Liberation Serif, DejaVu Serif, serif" fill="#000">
<text transform="translate(582.0 43.8) scale(1 1.08)" font-size="22" text-anchor="middle">MIDAS</text>
<text x="582.5" y="60.3" font-size="16" text-anchor="middle">10SEP</text>
<text x="523.5" y="41.1" font-size="13" text-anchor="middle">ES</text>
<text x="523.5" y="51.8" font-size="11" text-anchor="middle">O</text>
</g>
<path d="M523.0 26.2L523.644 27.856L525.3 28.5L523.644 29.144L523.0 30.8L522.356 29.144L520.7 28.5L522.356 27.856zM533.8 34.699999999999996L534.3879999999999 36.211999999999996L535.9 36.8L534.3879999999999 37.388L533.8 38.9L533.212 37.388L531.6999999999999 36.8L533.212 36.211999999999996zM512.9 37.5L513.74 39.66L515.9 40.5L513.74 41.34L512.9 43.5L512.06 41.34L509.9 40.5L512.06 39.66zM523.0 55.5L523.896 57.804L526.2 58.7L523.896 59.596000000000004L523.0 61.900000000000006L522.104 59.596000000000004L519.8 58.7L522.104 57.804z" fill="#000"/>
<g font-family="Liberation Mono, DejaVu Sans Mono, monospace" font-size="10" fill="#000" style="white-space:pre">
<text x="506.5" y="89" xml:space="preserve">User: der_spektroskopiker</text>
<text x="506.5" y="113" xml:space="preserve">Frame:</text>
<text x="506.5" y="125" xml:space="preserve">Deneb191107_fvnm.bdf</text>
<text x="506.5" y="149" xml:space="preserve">Area:</text>
<text x="506.5" y="161" xml:space="preserve">X: 9052 to 9935</text>
<text x="506.5" y="173" xml:space="preserve">Y: 1 to 1</text>
<text x="506.5" y="197" xml:space="preserve">Scales:</text>
<text x="506.5" y="209" xml:space="preserve">X: 0.984615</text>
<text x="506.5" y="221" xml:space="preserve">Y: 0.0101</text>
<text x="506.5" y="245" xml:space="preserve">Min: 0.1</text>
<text x="506.5" y="257" xml:space="preserve">Max: 1.2</text>
<text x="506.5" y="281" xml:space="preserve">Date: 10 Nov 2019</text>
<text x="506.5" y="293" xml:space="preserve">Time: 14:49:22</text>
</g>
</svg></div>
</div>
<div class="win" style="left:660px;top:25px;z-index:2;height:455px">
<div class="tb"><svg class="wicon" width="14" height="12" viewBox="0 0 14 12"><rect x="0.5" y="0.5" width="13" height="11" fill="#fdfdfc" stroke="#8c8a86"/><rect x="2" y="4" width="10" height="6" fill="#dfe1dc"/><rect x="0" y="0" width="14" height="3" fill="#3465a4"/><rect x="1" y="1" width="12" height="1" fill="#6d93c8"/></svg><span class="tt">MIDAS_01 graph_2</span><div class="wbs"><span class="wb"><svg width="18" height="18" viewBox="0 0 18 18"><rect x="4" y="12" width="10" height="2" fill="#5e5e5c"/></svg></span><span class="wb"><svg width="18" height="18" viewBox="0 0 18 18"><path d="M4.5 5.5h9v8h-9z" fill="none" stroke="#5e5e5c"/><rect x="4" y="4" width="10" height="2" fill="#5e5e5c"/></svg></span><span class="wb"><svg width="18" height="18" viewBox="0 0 18 18"><path d="M4.5 4.5l9 9M13.5 4.5l-9 9" stroke="#5e5e5c" stroke-width="1.8" fill="none"/></svg></span></div></div>
<div class="client"><svg class="plot" width="625" height="424" viewBox="0 0 625 424">
<defs><clipPath id="cpb"><rect x="94.5" y="21.5" width="405" height="361"/></clipPath></defs>
<path d="M94.5 21.5h405v361h-405zM111.5 21.5v5M111.5 382.5v-5M128.5 21.5v5M128.5 382.5v-5M145.5 21.5v5M145.5 382.5v-5M162.5 21.5v8M162.5 382.5v-8M178.5 21.5v5M178.5 382.5v-5M195.5 21.5v5M195.5 382.5v-5M212.5 21.5v5M212.5 382.5v-5M229.5 21.5v8M229.5 382.5v-8M246.5 21.5v5M246.5 382.5v-5M263.5 21.5v5M263.5 382.5v-5M280.5 21.5v5M280.5 382.5v-5M296.5 21.5v8M296.5 382.5v-8M313.5 21.5v5M313.5 382.5v-5M330.5 21.5v5M330.5 382.5v-5M347.5 21.5v5M347.5 382.5v-5M364.5 21.5v8M364.5 382.5v-8M381.5 21.5v5M381.5 382.5v-5M398.5 21.5v5M398.5 382.5v-5M415.5 21.5v5M415.5 382.5v-5M432.5 21.5v8M432.5 382.5v-8M448.5 21.5v5M448.5 382.5v-5M465.5 21.5v5M465.5 382.5v-5M482.5 21.5v5M482.5 382.5v-5M94.5 358.5h5M499.5 358.5h-5M94.5 334.5h5M499.5 334.5h-5M94.5 310.5h5M499.5 310.5h-5M94.5 286.5h5M499.5 286.5h-5M94.5 262.5h8M499.5 262.5h-8M94.5 238.5h5M499.5 238.5h-5M94.5 214.5h5M499.5 214.5h-5M94.5 189.5h5M499.5 189.5h-5M94.5 165.5h5M499.5 165.5h-5M94.5 141.5h8M499.5 141.5h-8M94.5 117.5h5M499.5 117.5h-5M94.5 93.5h5M499.5 93.5h-5M94.5 69.5h5M499.5 69.5h-5M94.5 45.5h5M499.5 45.5h-5" fill="none" stroke="#000" stroke-width="1" shape-rendering="crispEdges"/>
<g font-family="Liberation Mono, DejaVu Sans Mono, monospace" font-size="13.2" letter-spacing="0.48" fill="#000">
<text x="86.5" y="26.1" text-anchor="end">0.3</text>
<text x="86.5" y="146.4" text-anchor="end">0.2</text>
<text x="86.5" y="266.8" text-anchor="end">0.1</text>
<text x="86.5" y="387.1" text-anchor="end">0</text>
<text x="93.7" y="398.8" text-anchor="middle">5800</text>
<text x="161.2" y="398.8" text-anchor="middle">5820</text>
<text x="228.7" y="398.8" text-anchor="middle">5840</text>
<text x="296.2" y="398.8" text-anchor="middle">5860</text>
<text x="363.7" y="398.8" text-anchor="middle">5880</text>
<text x="431.2" y="398.8" text-anchor="middle">5900</text>
<text x="498.7" y="398.8" text-anchor="middle">5920</text>
<text x="297.0" y="416.1" text-anchor="middle">Position (WAVELENGTH)</text>
<text transform="translate(49 202.0) rotate(-90)" text-anchor="middle">Pixel value (FLUX )</text>
</g>
<polyline clip-path="url(#cpb)" points="94.5,152.7 95.1,151.9 95.6,151.6 96.2,152.4 96.8,152.8 97.3,152.2 97.9,151.9 98.4,151.6 99.0,152.9 99.6,152.9 100.1,151.8 100.7,152.0 101.2,151.4 101.8,151.7 102.4,152.4 102.9,152.5 103.5,150.9 104.1,152.5 104.6,152.8 105.2,153.0 105.7,152.3 106.3,152.3 106.9,152.6 107.4,152.5 108.0,152.3 108.6,152.1 109.1,151.9 109.7,152.4 110.3,153.5 110.8,152.2 111.4,153.3 111.9,152.7 112.5,153.4 113.1,152.6 113.6,153.1 114.2,152.5 114.8,150.9 115.3,152.7 115.9,152.2 116.4,153.4 117.0,152.9 117.6,152.4 118.1,152.8 118.7,152.6 119.2,152.7 119.8,153.4 120.4,152.5 120.9,153.3 121.5,151.9 122.1,153.2 122.6,152.5 123.2,152.9 123.8,152.4 124.3,153.3 124.9,152.4 125.4,153.0 126.0,152.3 126.6,152.7 127.1,153.0 127.7,153.5 128.2,152.6 128.8,152.8 129.4,152.2 129.9,153.3 130.5,152.8 131.1,152.9 131.6,153.0 132.2,153.1 132.7,153.1 133.3,153.5 133.9,153.8 134.4,153.5 135.0,152.9 135.6,152.5 136.1,152.8 136.7,152.8 137.3,153.0 137.8,153.2 138.4,154.1 138.9,155.1 139.5,156.5 140.1,159.3 140.6,159.7 141.2,156.8 141.8,155.8 142.3,154.0 142.9,153.3 143.4,154.2 144.0,152.2 144.6,152.6 145.1,153.5 145.7,153.2 146.2,153.5 146.8,154.1 147.4,153.7 147.9,153.4 148.5,153.1 149.1,153.3 149.6,153.7 150.2,153.0 150.8,154.1 151.3,153.3 151.9,153.2 152.4,153.9 153.0,154.8 153.6,154.3 154.1,153.7 154.7,153.6 155.2,153.0 155.8,154.4 156.4,153.9 156.9,153.6 157.5,154.0 158.1,155.2 158.6,153.5 159.2,152.7 159.7,153.5 160.3,154.5 160.9,154.3 161.4,153.9 162.0,152.7 162.6,153.7 163.1,154.0 163.7,153.3 164.3,154.2 164.8,153.1 165.4,154.5 165.9,154.4 166.5,153.8 167.1,153.4 167.6,153.9 168.2,154.1 168.8,155.3 169.3,154.7 169.9,154.6 170.4,154.6 171.0,154.0 171.6,154.6 172.1,154.0 172.7,154.7 173.2,155.7 173.8,156.5 174.4,157.5 174.9,157.6 175.5,157.6 176.1,156.3 176.6,156.0 177.2,153.9 177.8,153.8 178.3,154.7 178.9,154.8 179.4,155.3 180.0,154.5 180.6,154.5 181.1,153.5 181.7,154.5 182.2,155.1 182.8,156.0 183.4,153.9 183.9,154.6 184.5,155.6 185.1,154.7 185.6,155.6 186.2,152.9 186.7,154.2 187.3,154.5 187.9,154.9 188.4,156.0 189.0,154.9 189.6,155.7 190.1,154.6 190.7,156.1 191.3,155.4 191.8,154.3 192.4,154.1 192.9,155.6 193.5,155.8 194.1,154.5 194.6,154.6 195.2,155.6 195.8,155.4 196.3,155.5 196.9,155.8 197.4,155.6 198.0,154.6 198.6,154.9 199.1,154.2 199.7,155.4 200.2,155.5 200.8,156.0 201.4,155.5 201.9,156.2 202.5,156.5 203.1,155.2 203.6,154.9 204.2,155.2 204.8,155.0 205.3,155.6 205.9,156.2 206.4,155.8 207.0,156.1 207.6,156.5 208.1,156.9 208.7,156.8 209.2,156.0 209.8,156.0 210.4,156.4 210.9,155.4 211.5,156.1 212.1,155.9 212.6,155.6 213.2,156.8 213.7,157.4 214.3,156.0 214.9,156.8 215.4,155.8 216.0,156.5 216.6,156.5 217.1,157.4 217.7,160.3 218.3,160.1 218.8,161.3 219.4,160.5 219.9,159.0 220.5,157.3 221.1,156.7 221.6,156.4 222.2,157.9 222.8,157.3 223.3,158.3 223.9,157.1 224.4,156.8 225.0,157.6 225.6,157.1 226.1,157.1 226.7,156.7 227.2,157.8 227.8,157.8 228.4,157.8 228.9,156.5 229.5,156.9 230.1,157.6 230.6,157.4 231.2,157.5 231.8,157.5 232.3,157.8 232.9,157.9 233.4,158.4 234.0,158.1 234.6,156.9 235.1,157.6 235.7,157.9 236.2,158.1 236.8,158.0 237.4,157.8 237.9,158.4 238.5,158.0 239.1,158.0 239.6,158.6 240.2,158.7 240.7,158.8 241.3,158.9 241.9,157.9 242.4,159.7 243.0,158.6 243.6,158.8 244.1,158.9 244.7,158.5 245.3,158.0 245.8,158.6 246.4,158.8 246.9,159.1 247.5,158.8 248.1,158.3 248.6,159.1 249.2,159.5 249.8,159.6 250.3,159.6 250.9,159.8 251.4,158.4 252.0,158.9 252.6,159.2 253.1,158.4 253.7,159.6 254.2,158.8 254.8,158.8 255.4,160.2 255.9,160.2 256.5,159.9 257.1,159.0 257.6,158.8 258.2,160.2 258.8,159.0 259.3,159.8 259.9,159.9 260.4,160.0 261.0,159.9 261.6,160.7 262.1,160.3 262.7,160.5 263.2,159.6 263.8,158.8 264.4,158.5 264.9,160.2 265.5,161.0 266.1,160.3 266.6,160.6 267.2,159.1 267.7,159.9 268.3,160.6 268.9,159.8 269.4,160.0 270.0,161.3 270.6,160.8 271.1,160.9 271.7,161.4 272.3,162.4 272.8,163.8 273.4,164.1 273.9,164.1 274.5,163.1 275.1,160.8 275.6,160.9 276.2,160.6 276.8,161.7 277.3,161.0 277.9,160.5 278.4,161.7 279.0,160.4 279.6,161.3 280.1,160.9 280.7,161.2 281.2,161.0 281.8,160.6 282.4,161.5 282.9,160.4 283.5,161.8 284.1,161.9 284.6,161.0 285.2,162.0 285.8,161.7 286.3,161.0 286.9,160.9 287.4,162.6 288.0,161.4 288.6,160.7 289.1,161.2 289.7,162.2 290.2,163.0 290.8,164.0 291.4,165.6 291.9,165.7 292.5,165.2 293.1,164.0 293.6,162.3 294.2,162.5 294.7,163.0 295.3,161.6 295.9,162.8 296.4,162.5 297.0,162.4 297.6,162.5 298.1,163.0 298.7,162.6 299.3,161.3 299.8,162.9 300.4,162.7 300.9,162.1 301.5,162.4 302.1,162.4 302.6,162.4 303.2,164.0 303.8,163.5 304.3,163.0 304.9,162.9 305.4,162.5 306.0,163.0 306.6,163.4 307.1,163.4 307.7,163.5 308.2,163.4 308.8,163.2 309.4,163.8 309.9,164.1 310.5,164.2 311.1,163.2 311.6,163.2 312.2,163.4 312.8,163.5 313.3,163.6 313.9,164.1 314.4,163.8 315.0,164.8 315.6,164.5 316.1,165.1 316.7,165.1 317.2,167.0 317.8,167.8 318.4,167.9 318.9,166.8 319.5,166.8 320.1,166.0 320.6,164.6 321.2,165.5 321.7,164.7 322.3,165.3 322.9,165.1 323.4,166.1 324.0,164.8 324.6,165.5 325.1,165.8 325.7,164.2 326.3,165.0 326.8,163.6 327.4,165.3 327.9,165.8 328.5,165.6 329.1,164.8 329.6,165.8 330.2,165.6 330.8,165.6 331.3,166.5 331.9,166.0 332.4,166.4 333.0,166.8 333.6,165.7 334.1,165.9 334.7,166.3 335.2,166.9 335.8,167.5 336.4,166.2 336.9,166.6 337.5,167.5 338.1,166.7 338.6,167.6 339.2,166.8 339.8,166.8 340.3,166.7 340.9,166.9 341.4,167.0 342.0,167.7 342.6,167.4 343.1,167.5 343.7,167.4 344.2,167.2 344.8,167.2 345.4,166.9 345.9,169.6 346.5,169.0 347.1,171.0 347.6,172.3 348.2,176.7 348.7,182.3 349.3,185.3 349.9,188.6 350.4,188.5 351.0,188.1 351.6,184.3 352.1,180.2 352.7,176.2 353.3,173.3 353.8,171.9 354.4,169.4 354.9,168.4 355.5,168.8 356.1,169.2 356.6,168.6 357.2,168.4 357.8,168.9 358.3,168.9 358.9,168.1 359.4,169.6 360.0,169.3 360.6,170.1 361.1,169.5 361.7,169.6 362.2,169.8 362.8,169.7 363.4,168.4 363.9,169.6 364.5,169.6 365.1,166.9 365.6,169.0 366.2,168.0 366.8,170.6 367.3,170.8 367.9,171.2 368.4,171.8 369.0,170.2 369.6,172.3 370.1,171.9 370.7,170.5 371.2,172.1 371.8,172.0 372.4,169.0 372.9,170.1 373.5,170.0 374.1,170.1 374.6,169.7 375.2,168.1 375.7,169.7 376.3,170.0 376.9,170.8 377.4,171.7 378.0,173.6 378.6,176.5 379.1,178.7 379.7,175.2 380.3,174.1 380.8,172.5 381.4,172.1 381.9,171.0 382.5,172.5 383.1,171.5 383.6,171.4 384.2,173.2 384.8,173.7 385.3,176.7 385.9,176.8 386.4,177.5 387.0,174.4 387.6,172.1 388.1,172.6 388.7,175.9 389.2,176.8 389.8,181.5 390.4,180.0 390.9,177.0 391.5,176.1 392.1,174.5 392.6,172.9 393.2,172.1 393.8,172.7 394.3,171.7 394.9,172.7 395.4,174.7 396.0,180.5 396.6,198.4 397.1,226.1 397.7,263.1 398.2,297.6 398.8,307.9 399.4,293.7 399.9,258.5 400.5,222.8 401.1,193.7 401.6,183.0 402.2,177.3 402.7,176.5 403.3,179.3 403.9,180.2 404.4,182.6 405.0,180.9 405.6,176.4 406.1,174.5 406.7,175.1 407.3,175.0 407.8,178.6 408.4,181.8 408.9,182.2 409.5,184.3 410.1,182.1 410.6,177.5 411.2,178.4 411.8,173.8 412.3,173.9 412.9,175.1 413.4,174.4 414.0,173.9 414.6,173.4 415.1,172.5 415.7,176.0 416.2,183.2 416.8,197.4 417.4,221.9 417.9,254.0 418.5,277.1 419.1,280.9 419.6,261.1 420.2,231.1 420.8,201.4 421.3,187.6 421.9,179.6 422.4,176.9 423.0,174.9 423.6,174.1 424.1,175.3 424.7,176.2 425.2,177.6 425.8,181.9 426.4,186.5 426.9,184.8 427.5,183.5 428.1,182.4 428.6,179.7 429.2,180.7 429.7,183.1 430.3,183.7 430.9,184.7 431.4,183.2 432.0,180.9 432.6,178.9 433.1,175.3 433.7,177.5 434.3,176.8 434.8,178.1 435.4,180.3 435.9,183.2 436.5,184.4 437.1,183.2 437.6,182.7 438.2,179.4 438.8,179.9 439.3,178.9 439.9,181.1 440.4,178.7 441.0,179.1 441.6,176.8 442.1,177.4 442.7,177.4 443.2,177.0 443.8,178.4 444.4,177.0 444.9,176.3 445.5,176.1 446.1,176.5 446.6,177.2 447.2,176.7 447.8,177.9 448.3,177.9 448.9,180.1 449.4,178.1 450.0,182.5 450.6,181.3 451.1,178.2 451.7,179.2 452.2,181.0 452.8,179.6 453.4,177.3 453.9,177.5 454.5,178.8 455.1,177.2 455.6,178.2 456.2,177.9 456.7,177.2 457.3,181.0 457.9,180.9 458.4,178.7 459.0,178.9 459.6,181.8 460.1,184.8 460.7,185.8 461.3,187.1 461.8,183.4 462.4,182.3 462.9,181.1 463.5,180.1 464.1,179.1 464.6,180.2 465.2,178.1 465.8,178.2 466.3,177.9 466.9,180.5 467.4,180.6 468.0,179.2 468.6,182.9 469.1,180.7 469.7,182.0 470.2,182.5 470.8,183.7 471.4,180.0 471.9,181.8 472.5,182.5 473.1,182.2 473.6,180.4 474.2,180.8 474.8,179.5 475.3,179.6 475.9,179.3 476.4,180.5 477.0,180.8 477.6,181.0 478.1,182.1 478.7,182.8 479.2,182.3 479.8,185.0 480.4,186.2 480.9,188.1 481.5,187.2 482.1,188.1 482.6,184.6 483.2,184.6 483.7,181.8 484.3,182.4 484.9,179.1 485.4,181.6 486.0,180.8 486.6,181.8 487.1,180.3 487.7,183.3 488.3,182.3 488.8,183.2 489.4,182.2 489.9,185.3 490.5,183.2 491.1,182.9 491.6,184.9 492.2,184.5 492.8,182.9 493.3,183.0 493.9,183.8 494.4,183.8 495.0,182.0 495.6,181.1 496.1,182.8 496.7,187.8 497.2,190.6 497.8,188.0 498.4,189.2 498.9,186.5 499.5,185.7" fill="none" stroke="#000" stroke-width="1" stroke-linejoin="miter" shape-rendering="crispEdges"/>
<path d="M507.5 21.5h116v43h-116zM538.5 21.5v43" fill="none" stroke="#000" shape-rendering="crispEdges"/>
<g font-family="Liberation Serif, DejaVu Serif, serif" fill="#000">
<text transform="translate(582.0 43.8) scale(1 1.08)" font-size="22" text-anchor="middle">MIDAS</text>
<text x="582.5" y="60.3" font-size="16" text-anchor="middle">10SEP</text>
<text x="523.5" y="41.1" font-size="13" text-anchor="middle">ES</text>
<text x="523.5" y="51.8" font-size="11" text-anchor="middle">O</text>
</g>
<path d="M523.0 26.2L523.644 27.856L525.3 28.5L523.644 29.144L523.0 30.8L522.356 29.144L520.7 28.5L522.356 27.856zM533.8 34.699999999999996L534.3879999999999 36.211999999999996L535.9 36.8L534.3879999999999 37.388L533.8 38.9L533.212 37.388L531.6999999999999 36.8L533.212 36.211999999999996zM512.9 37.5L513.74 39.66L515.9 40.5L513.74 41.34L512.9 43.5L512.06 41.34L509.9 40.5L512.06 39.66zM523.0 55.5L523.896 57.804L526.2 58.7L523.896 59.596000000000004L523.0 61.900000000000006L522.104 59.596000000000004L519.8 58.7L522.104 57.804z" fill="#000"/>
<g font-family="Liberation Mono, DejaVu Sans Mono, monospace" font-size="10" fill="#000" style="white-space:pre">
<text x="506.5" y="89" xml:space="preserve">User: der_spektroskopiker</text>
<text x="506.5" y="113" xml:space="preserve">Frame:</text>
<text x="506.5" y="125" xml:space="preserve">Deneb191107_fvnm.bdf</text>
<text x="506.5" y="149" xml:space="preserve">Area:</text>
<text x="506.5" y="161" xml:space="preserve">X: 9052 to 9935</text>
<text x="506.5" y="173" xml:space="preserve">Y: 1 to 1</text>
<text x="506.5" y="197" xml:space="preserve">Scales:</text>
<text x="506.5" y="209" xml:space="preserve">X: 0.984615</text>
<text x="506.5" y="221" xml:space="preserve">Y: 0.00276817</text>
<text x="506.5" y="245" xml:space="preserve">Min: 0</text>
<text x="506.5" y="257" xml:space="preserve">Max: 0.3</text>
<text x="506.5" y="281" xml:space="preserve">Date: 10 Nov 2019</text>
<text x="506.5" y="293" xml:space="preserve">Time: 14:52:01</text>
</g>
</svg></div>
</div>
<div id="term"><div class="tb"><svg class="ticon" width="17" height="15" viewBox="0 0 17 15" style="opacity:1"><rect x="0.5" y="0.5" width="16" height="14" rx="1.5" fill="#d3d7cf" stroke="#555753"/><rect x="2" y="2" width="13" height="10" fill="#2e3436"/><path d="M3.5 4l2 1.5l-2 1.5M6.5 8.5h3" stroke="#eeeeec" stroke-width="1" fill="none"/></svg><span class="tt">der_spektroskopiker@vm:~/Deneb191107</span></div>
<div class="menu"><span style="left:11px">Datei</span><span style="left:56px">Bearbeiten</span><span style="left:132px">Ansicht</span><span style="left:190px">Suchen</span><span style="left:248px">Terminal</span><span style="left:312px">Hilfe</span></div>
<div class="scr"><span style="color:#cc0000">*** FATAL: wrong syntax or not existing keyword</span>
Midas 019&gt; set/gra  yaxis=0,03
Midas 020&gt; plot/row Deneb191107_fvnm.bdf</div></div>
<div class="win foc" style="left:43px;top:179px;z-index:5;height:455px">
<div class="tb"><svg class="wicon" width="14" height="12" viewBox="0 0 14 12"><rect x="0.5" y="0.5" width="13" height="11" fill="#fdfdfc" stroke="#8c8a86"/><rect x="2" y="4" width="10" height="6" fill="#dfe1dc"/><rect x="0" y="0" width="14" height="3" fill="#3465a4"/><rect x="1" y="1" width="12" height="1" fill="#6d93c8"/></svg><span class="tt">MIDAS_01 graph_3</span><div class="wbs"><span class="wb f"><svg width="18" height="18" viewBox="0 0 18 18"><rect x="4" y="12" width="10" height="2" fill="#ffffff"/></svg></span><span class="wb f"><svg width="18" height="18" viewBox="0 0 18 18"><path d="M4.5 5.5h9v8h-9z" fill="none" stroke="#ffffff"/><rect x="4" y="4" width="10" height="2" fill="#ffffff"/></svg></span><span class="wb f"><svg width="18" height="18" viewBox="0 0 18 18"><path d="M4.5 4.5l9 9M13.5 4.5l-9 9" stroke="#ffffff" stroke-width="1.8" fill="none"/></svg></span></div></div>
<div class="client"><svg class="plot" width="625" height="424" viewBox="0 0 625 424">
<defs><clipPath id="cpc"><rect x="94.5" y="21.5" width="405" height="361"/></clipPath></defs>
<path d="M94.5 21.5h405v361h-405zM111.5 21.5v5M111.5 382.5v-5M128.5 21.5v5M128.5 382.5v-5M145.5 21.5v5M145.5 382.5v-5M162.5 21.5v8M162.5 382.5v-8M178.5 21.5v5M178.5 382.5v-5M195.5 21.5v5M195.5 382.5v-5M212.5 21.5v5M212.5 382.5v-5M229.5 21.5v8M229.5 382.5v-8M246.5 21.5v5M246.5 382.5v-5M263.5 21.5v5M263.5 382.5v-5M280.5 21.5v5M280.5 382.5v-5M296.5 21.5v8M296.5 382.5v-8M313.5 21.5v5M313.5 382.5v-5M330.5 21.5v5M330.5 382.5v-5M347.5 21.5v5M347.5 382.5v-5M364.5 21.5v8M364.5 382.5v-8M381.5 21.5v5M381.5 382.5v-5M398.5 21.5v5M398.5 382.5v-5M415.5 21.5v5M415.5 382.5v-5M432.5 21.5v8M432.5 382.5v-8M448.5 21.5v5M448.5 382.5v-5M465.5 21.5v5M465.5 382.5v-5M482.5 21.5v5M482.5 382.5v-5M94.5 363.5h8M499.5 363.5h-8M94.5 344.5h5M499.5 344.5h-5M94.5 325.5h5M499.5 325.5h-5M94.5 306.5h5M499.5 306.5h-5M94.5 286.5h8M499.5 286.5h-8M94.5 267.5h5M499.5 267.5h-5M94.5 248.5h5M499.5 248.5h-5M94.5 229.5h5M499.5 229.5h-5M94.5 210.5h8M499.5 210.5h-8M94.5 190.5h5M499.5 190.5h-5M94.5 171.5h5M499.5 171.5h-5M94.5 152.5h5M499.5 152.5h-5M94.5 133.5h8M499.5 133.5h-8M94.5 114.5h5M499.5 114.5h-5M94.5 94.5h5M499.5 94.5h-5M94.5 75.5h5M499.5 75.5h-5M94.5 56.5h8M499.5 56.5h-8M94.5 37.5h5M499.5 37.5h-5" fill="none" stroke="#000" stroke-width="1" shape-rendering="crispEdges"/>
<g font-family="Liberation Mono, DejaVu Sans Mono, monospace" font-size="13.2" letter-spacing="0.48" fill="#000">
<text x="86.5" y="61.1" text-anchor="end">1.2</text>
<text x="86.5" y="137.9" text-anchor="end">1</text>
<text x="86.5" y="214.6" text-anchor="end">0.8</text>
<text x="86.5" y="291.4" text-anchor="end">0.6</text>
<text x="86.5" y="368.2" text-anchor="end">0.4</text>
<text x="93.7" y="398.8" text-anchor="middle">5800</text>
<text x="161.2" y="398.8" text-anchor="middle">5820</text>
<text x="228.7" y="398.8" text-anchor="middle">5840</text>
<text x="296.2" y="398.8" text-anchor="middle">5860</text>
<text x="363.7" y="398.8" text-anchor="middle">5880</text>
<text x="431.2" y="398.8" text-anchor="middle">5900</text>
<text x="498.7" y="398.8" text-anchor="middle">5920</text>
<text x="297.0" y="416.1" text-anchor="middle">Position (Wavelength)</text>
<text transform="translate(49 202.0) rotate(-90)" text-anchor="middle">Pixel value ( )</text>
</g>
<polyline clip-path="url(#cpc)" points="94.5,52.4 97.6,48.6 101.5,40.9 104.5,47.8 109.2,49.3 113.0,41.6 118.4,54.0 122.2,42.4 126.8,48.6 129.9,43.2 133.8,51.6 138.4,47.0 140.7,60.1 145.3,45.5 148.4,44.7 150.7,51.6 154.5,44.7 156.8,50.9 159.2,46.3 160.7,53.2 163.0,47.0 165.3,50.9 166.5,52.1 167.1,51.8 167.6,48.9 168.2,46.9 168.8,47.6 169.3,50.5 169.9,51.9 170.4,50.4 171.0,49.1 171.6,48.9 172.1,48.6 172.7,50.5 173.2,53.9 173.8,55.2 174.4,54.1 174.9,57.1 175.5,56.3 176.1,59.2 176.6,58.4 177.2,55.4 177.8,51.8 178.3,48.3 178.9,47.9 179.4,51.0 180.0,53.0 180.6,54.0 181.1,53.0 181.7,48.1 182.2,49.1 182.8,49.9 183.4,52.8 183.9,51.8 184.5,51.7 185.1,49.5 185.6,49.0 186.2,50.8 186.7,54.6 187.3,57.7 187.9,58.3 188.4,57.2 189.0,52.9 189.6,53.8 190.1,53.8 190.7,56.2 191.3,52.6 191.8,49.3 192.4,46.8 192.9,49.2 193.5,53.3 194.1,57.1 194.6,55.2 195.2,49.3 195.8,46.8 196.3,48.5 196.9,53.9 197.4,58.1 198.0,59.8 198.6,56.9 199.1,55.8 199.7,55.9 200.2,56.3 200.8,57.9 201.4,57.3 201.9,52.4 202.5,50.3 203.1,49.7 203.6,54.2 204.2,56.4 204.8,55.4 205.3,54.2 205.9,50.8 206.4,50.6 207.0,53.4 207.6,56.8 208.1,56.1 208.7,55.4 209.2,51.1 209.8,50.1 210.4,54.9 210.9,60.3 211.5,65.4 212.1,66.0 212.6,64.3 213.2,61.7 213.7,60.6 214.3,59.8 214.9,58.2 215.4,55.8 216.0,53.1 216.6,52.8 217.1,55.1 217.7,56.5 218.3,56.9 218.8,56.5 219.4,53.6 219.9,52.7 220.5,54.1 221.1,57.7 221.6,57.9 222.2,57.4 222.8,54.4 223.3,54.0 223.9,53.5 224.4,57.8 225.0,58.9 225.6,58.5 226.1,55.1 226.7,53.3 227.2,53.8 227.8,58.1 228.4,61.0 228.9,60.8 229.5,55.3 230.1,52.9 230.6,54.1 231.2,56.5 231.8,60.3 232.3,60.6 232.9,57.7 233.4,55.1 234.0,54.0 234.6,57.5 235.1,61.6 235.7,61.3 236.2,62.3 236.8,61.5 237.4,64.6 237.9,66.3 238.5,66.7 239.1,64.2 239.6,60.5 240.2,56.0 240.7,53.6 241.3,57.6 241.9,61.1 242.4,63.5 243.0,61.8 243.6,56.4 244.1,55.3 244.7,57.3 245.3,61.2 245.8,63.7 246.4,61.7 246.9,57.3 247.5,56.2 248.1,57.1 248.6,61.1 249.2,63.8 249.8,62.1 250.3,60.1 250.9,59.3 251.4,57.2 252.0,61.4 252.6,61.7 253.1,61.2 253.7,60.1 254.2,58.9 254.8,58.7 255.4,60.1 255.9,63.7 256.5,61.6 257.1,61.3 257.6,57.5 258.2,58.8 258.8,62.2 259.3,64.4 259.9,64.2 260.4,61.0 261.0,59.0 261.6,60.8 262.1,62.3 262.7,64.4 263.2,64.8 263.8,62.2 264.4,59.5 264.9,57.9 265.5,62.1 266.1,64.6 266.6,65.1 267.2,63.2 267.7,60.2 268.3,61.4 268.9,63.3 269.4,65.4 270.0,66.1 270.6,62.8 271.1,62.6 271.7,61.9 272.3,62.9 272.8,65.6 273.4,67.7 273.9,66.7 274.5,62.6 275.1,61.6 275.6,62.7 276.2,69.7 276.8,73.7 277.3,75.6 277.9,70.1 278.4,65.5 279.0,66.0 279.6,69.9 280.1,70.9 280.7,68.8 281.2,63.4 281.8,62.2 282.4,63.4 282.9,66.3 283.5,68.6 284.1,68.4 284.6,65.4 285.2,63.1 285.8,65.9 286.3,66.8 286.9,70.2 287.4,68.8 288.0,66.7 288.6,65.4 289.1,65.1 289.7,68.0 290.2,69.8 290.8,70.0 291.4,68.4 291.9,64.7 292.5,64.5 293.1,68.4 293.6,71.7 294.2,70.1 294.7,68.6 295.3,65.8 295.9,65.0 296.4,67.5 297.0,70.8 297.6,71.7 298.1,69.2 298.7,67.4 299.3,68.0 299.8,67.5 300.4,69.5 300.9,71.4 301.5,69.2 302.1,69.1 302.6,68.2 303.2,69.3 303.8,72.3 304.3,76.1 304.9,76.8 305.4,75.5 306.0,73.6 306.6,73.8 307.1,73.9 307.7,74.5 308.2,73.2 308.8,68.0 309.4,66.0 309.9,68.9 310.5,70.4 311.1,74.1 311.6,73.3 312.2,69.6 312.8,65.9 313.3,67.4 313.9,71.6 314.4,75.1 315.0,75.3 315.6,71.2 316.1,68.7 316.7,67.0 317.2,71.2 317.8,73.5 318.4,73.8 318.9,69.8 319.5,67.6 320.1,69.0 320.6,71.6 321.2,72.8 321.7,74.0 322.3,71.9 322.9,69.1 323.4,67.5 324.0,70.1 324.6,74.1 325.1,75.8 325.7,72.2 326.3,69.2 326.8,66.7 327.4,69.7 327.9,74.9 328.5,76.3 329.1,72.4 329.6,69.6 330.2,70.0 330.8,74.5 331.3,81.1 331.9,81.8 332.4,79.2 333.0,70.6 335.5,80.0 339.2,71.9 341.7,75.6 344.8,68.8 346.7,75.0 348.6,91.2 349.6,104.9 350.4,114.8 351.7,108.6 352.9,94.9 353.9,86.2 355.4,76.2 357.6,68.8 359.8,76.9 362.9,79.4 365.1,72.5 367.6,83.1 369.7,74.4 372.2,78.1 374.7,84.3 375.9,76.9 377.8,83.1 380.0,76.2 382.2,86.8 384.6,91.2 386.8,79.4 389.6,94.3 391.5,81.8 393.4,75.0 395.2,87.4 396.2,91.1 396.9,135.1 397.3,195.1 397.6,315.2 398.6,361.2 399.3,314.2 400.2,223.1 400.9,195.1 401.2,135.1 402.0,91.1 403.9,103.6 404.9,91.2 407.7,87.4 412.0,73.1 415.1,86.2 416.6,93.7 417.4,129.1 417.9,195.1 418.2,243.1 418.9,307.7 419.9,243.1 420.6,195.1 421.2,130.1 421.6,92.4 422.9,82.5 425.7,97.4 426.3,87.4 428.2,83.1 430.4,76.9 432.2,98.7 434.1,76.9 435.7,88.7 437.3,107.4 438.8,87.4 441.3,85.0 442.5,87.4 446.9,76.2 448.7,81.2 450.0,86.8 454.3,75.0 457.5,80.0 461.2,83.1 463.1,87.4 464.7,81.8 468.0,89.9 469.9,80.0 474.3,73.8 476.1,85.6 478.0,78.7 480.5,86.2 482.3,87.4 484.6,93.1 486.7,83.7 489.2,80.6 492.7,77.5 494.8,93.1 497.3,94.9 499.1,96.8" fill="none" stroke="#000" stroke-width="1" stroke-linejoin="miter" shape-rendering="crispEdges"/>
<path d="M507.5 21.5h116v43h-116zM538.5 21.5v43" fill="none" stroke="#000" shape-rendering="crispEdges"/>
<g font-family="Liberation Serif, DejaVu Serif, serif" fill="#000">
<text transform="translate(582.0 43.8) scale(1 1.08)" font-size="22" text-anchor="middle">MIDAS</text>
<text x="582.5" y="60.3" font-size="16" text-anchor="middle">10SEP</text>
<text x="523.5" y="41.1" font-size="13" text-anchor="middle">ES</text>
<text x="523.5" y="51.8" font-size="11" text-anchor="middle">O</text>
</g>
<path d="M523.0 26.2L523.644 27.856L525.3 28.5L523.644 29.144L523.0 30.8L522.356 29.144L520.7 28.5L522.356 27.856zM533.8 34.699999999999996L534.3879999999999 36.211999999999996L535.9 36.8L534.3879999999999 37.388L533.8 38.9L533.212 37.388L531.6999999999999 36.8L533.212 36.211999999999996zM512.9 37.5L513.74 39.66L515.9 40.5L513.74 41.34L512.9 43.5L512.06 41.34L509.9 40.5L512.06 39.66zM523.0 55.5L523.896 57.804L526.2 58.7L523.896 59.596000000000004L523.0 61.900000000000006L522.104 59.596000000000004L519.8 58.7L522.104 57.804z" fill="#000"/>
<g font-family="Liberation Mono, DejaVu Sans Mono, monospace" font-size="10" fill="#000" style="white-space:pre">
<text x="506.5" y="89" xml:space="preserve">User: der_spektroskopiker</text>
<text x="506.5" y="113" xml:space="preserve">Frame:</text>
<text x="506.5" y="125" xml:space="preserve">_deneb191107_20191107</text>
<text x="506.5" y="149" xml:space="preserve">Area:</text>
<text x="506.5" y="161" xml:space="preserve">X: 29111 to 31511</text>
<text x="506.5" y="173" xml:space="preserve">Y: 1 to 1</text>
<text x="506.5" y="197" xml:space="preserve">Scales:</text>
<text x="506.5" y="209" xml:space="preserve">X: 0.984615</text>
<text x="506.5" y="221" xml:space="preserve">Y: 0.00865787</text>
<text x="506.5" y="245" xml:space="preserve">Min: 0.352</text>
<text x="506.5" y="257" xml:space="preserve">Max: 1.29</text>
<text x="506.5" y="281" xml:space="preserve">Date: 10 Nov 2019</text>
<text x="506.5" y="293" xml:space="preserve">Time: 14:57:57</text>
</g>
</svg></div>
</div>
<svg style="position:absolute;left:440px;top:278px;z-index:9" width="16" height="22" viewBox="0 0 16 22"><path d="M1.5 1.5v15l3.5-3.2l2.6 6l2.4-1l-2.6-5.8h5z" fill="#111" stroke="#ddd" stroke-width="1"/></svg>
<div class="side" style="left:0"></div><div class="side" style="left:1341px"></div>
<div id="top"><svg class="fed" width="21" height="21" viewBox="0 0 21 21"><path d="M10.500 0a10.500 10.500 0 0 1 10.500 10.500a10.500 10.500 0 0 1-10.500 10.500h-8a2.500 2.500 0 0 1-2.500-2.500v-8a10.500 10.500 0 0 1 10.500-10.500z" fill="#294172"/><path d="M15.350 4.470A3.500 3.500 0 0 1 13.600 11h-3.500M4.850 17.430A3.500 3.500 0 0 1 6.600 10.900h3.500" fill="none" stroke="#4c83d0" stroke-width="1.900"/><path d="M15.350 4.470A3.500 3.500 0 0 0 10.100 7.500L10.100 14.400A3.500 3.500 0 0 1 4.850 17.430" fill="none" stroke="#fff" stroke-width="2" stroke-linecap="round"/><path d="M6.300 11.100h7.200" stroke="#fff" stroke-width="2" stroke-linecap="round"/></svg>
<svg style="position:absolute;left:231px;top:2px" width="24" height="20" viewBox="0 0 24 20"><rect x="1.5" y="1.5" width="21" height="17" rx="1.5" fill="#babdb6" stroke="#6e706c"/><rect x="3" y="3" width="18" height="13" fill="#1d2423"/><path d="M3 5.5h18M3 8.5h18M3 11.5h18M3 14.5h18" stroke="#2b3433" stroke-width="1"/><path d="M5 5l2.5 1.7L5 8.4M8.5 10h3" stroke="#e6e8e4" stroke-width="1.2" fill="none"/><path d="M13 3h8v6z" fill="#fff" opacity=".18"/></svg>
<svg style="position:absolute;left:263px;top:0" width="25" height="24" viewBox="0 0 25 24"><defs><radialGradient id="ffg" cx=".38" cy=".22" r=".8"><stop offset="0" stop-color="#d8f6ff"/><stop offset=".3" stop-color="#58b6f2"/><stop offset=".65" stop-color="#1b5ec2"/><stop offset="1" stop-color="#082a78"/></radialGradient><linearGradient id="ffo" x1="0" y1="0" x2="1" y2="0"><stop offset="0" stop-color="#d9480c"/><stop offset=".3" stop-color="#ee6d10"/><stop offset=".7" stop-color="#f28c14"/><stop offset=".88" stop-color="#fbd22c"/><stop offset="1" stop-color="#e37a10"/></linearGradient><linearGradient id="ffs" x1="0" y1="0" x2="0" y2="1"><stop offset=".55" stop-color="#000" stop-opacity="0"/><stop offset="1" stop-color="#8a1a04" stop-opacity=".75"/></linearGradient></defs><circle cx="12.300" cy="11.600" r="11.400" fill="url(#ffo)"/><circle cx="12.300" cy="11.600" r="11.400" fill="url(#ffs)"/><circle cx="13.600" cy="8.700" r="8" fill="url(#ffg)"/><path d="M0.900 10L2.600 2.800L6.200 4.700L9.600 3.200L9.200 5.600L11.600 6.800L9.600 8.200L10 9.400L8.600 10.500L8 12.100C10 13.700 12.500 13.100 14.400 12.500C13.200 14.500 11.700 15 10.500 15L12.500 16.900L6 19L1.500 15z" fill="#ec6a10"/><path d="M8 12.100C7 13.500 7.500 15 10.500 15L12.500 16.900C8 17.500 5.500 15 6.200 11z" fill="#c8400a"/></svg>
<svg style="position:absolute;left:296px;top:0" width="46" height="24" viewBox="0 0 46 24"><defs><linearGradient id="gb" x1="0" y1="0" x2="1" y2="1"><stop offset="0" stop-color="#80827f"/><stop offset=".55" stop-color="#8f918e"/><stop offset=".56" stop-color="#9c9e9b"/><stop offset="1" stop-color="#a9aba8"/></linearGradient></defs><rect x="0" y="0" width="46" height="24" fill="#f6f6f5"/><rect x="3" y="0" width="41" height="24" fill="url(#gb)"/><path d="M38 24v-3.500h6v-1.500l2 0v5z" fill="#f4f4f3"/></svg>
<svg style="position:absolute;left:352px;top:0" width="24" height="24" viewBox="0 0 24 24"><rect x="1" y="17" width="20" height="4" rx="1" fill="#e8a21a"/><rect x="1.500" y="4" width="19" height="15" fill="#eadb25" stroke="#c9b40e"/><path d="M2 4.500h18v3h-18z" fill="#f3e85a"/><path d="M21.300 1.200l1.700 1.700l-11 10.500l-2.700 1.200l1-2.800z" fill="#c58a52" stroke="#6b4a2a" stroke-width=".7"/><path d="M9.300 14.600l1-2.800l1.700 1.600z" fill="#2a2a2a"/></svg>
<svg style="position:absolute;left:1120px;top:3px" width="7" height="19" viewBox="0 0 7 19"><g fill="#c4c2bd"><rect x="1" y="1" width="1" height="1"/><rect x="4" y="1" width="1" height="1"/><rect x="1" y="4" width="1" height="1"/><rect x="4" y="4" width="1" height="1"/><rect x="1" y="7" width="1" height="1"/><rect x="4" y="7" width="1" height="1"/><rect x="1" y="10" width="1" height="1"/><rect x="4" y="10" width="1" height="1"/><rect x="1" y="13" width="1" height="1"/><rect x="4" y="13" width="1" height="1"/><rect x="1" y="16" width="1" height="1"/><rect x="4" y="16" width="1" height="1"/></g></svg>
<svg style="position:absolute;left:1131px;top:0" width="22" height="23" viewBox="0 0 22 23"><defs><linearGradient id="rl" x1="0" y1="0" x2="1" y2="0"><stop offset="0" stop-color="#ef4a4a"/><stop offset=".4" stop-color="#e01212"/><stop offset="1" stop-color="#a80606"/></linearGradient></defs><ellipse cx="11" cy="18.500" rx="9.800" ry="3.200" fill="#e3e3e1" stroke="#a8a8a6" stroke-width=".8"/><path d="M2 17.500L3.300 7C3.800 2.800 7 1 11 1S18.200 2.800 18.700 7L20 17.500c-2 1.600-5.500 2-9 2s-7-.4-9-2z" fill="url(#rl)"/><rect x="9.600" y="5" width="2.800" height="8" rx="1" fill="#fff"/><rect x="9.600" y="14" width="2.800" height="2.600" rx="1" fill="#fff"/></svg>
<svg style="position:absolute;left:1160px;top:0" width="23" height="24" viewBox="0 0 23 24"><defs><radialGradient id="gc" cx=".4" cy=".3" r=".8"><stop offset="0" stop-color="#8a8a8a"/><stop offset="1" stop-color="#4a4a4a"/></radialGradient></defs><circle cx="11.300" cy="11.500" r="10.500" fill="url(#gc)"/><path d="M4.800 9.600h1.800v1.300h1.700v-2.200h2.500v-1.500h3.600l1.200 1.600h1.400v1.800l1.200 1v3h-1.600v1.500h-2.200l-1.200 1.300h-5l-1.600-2.100h-1v-1.600h-.8z" fill="#6e6e6e" stroke="#f59a28" stroke-width="1.500" stroke-linejoin="round"/><path d="M10.800 10.800l2.600-2l-.8 2.300h1.900l-3.200 3.200l.8-2.500z" fill="#f7b050"/></svg>
<svg style="position:absolute;left:1187px;top:0" width="24" height="24" viewBox="0 0 24 24"><rect x="8.500" y="1.500" width="13" height="10" rx="1" fill="#e9e9e7" stroke="#9a9a98"/><rect x="10" y="3" width="10" height="7" fill="#2d5299"/><path d="M13 12h5l1 3h-7z" fill="#d5d5d3"/><rect x="10" y="15" width="12" height="2" rx="1" fill="#ececea" stroke="#b5b5b3" stroke-width=".5"/><rect x="1.500" y="6.500" width="13" height="10" rx="1" fill="#f1f1ef" stroke="#9a9a98"/><rect x="3" y="8" width="10" height="7" fill="#2d5299"/><path d="M3 8h10l-10 5z" fill="#4a72ba"/><path d="M6 17h5l1 2.500h-7z" fill="#d5d5d3"/><rect x="1" y="19.500" width="15" height="2.500" rx="1.200" fill="#f1f1ef" stroke="#b0b0ae" stroke-width=".6"/></svg>

<span class="mi" style="left:36px">Anwendungen</span><span class="mi" style="left:132px">Orte</span><span class="mi" style="left:171px">System</span>
<span class="mi" style="left:996px;letter-spacing:.18px">So, 10. Nov, 14:58</span>
<span class="mi" style="left:1232px;font-weight:bold">Der Spektroskopiker</span>
</div>
<div id="bot"><div class="task" style="left:12px"><svg class="ticon" width="17" height="15" viewBox="0 0 17 15" style="opacity:1"><rect x="0.5" y="0.5" width="16" height="14" rx="1.5" fill="#d3d7cf" stroke="#555753"/><rect x="2" y="2" width="13" height="10" fill="#2e3436"/><path d="M3.5 4l2 1.5l-2 1.5M6.5 8.5h3" stroke="#eeeeec" stroke-width="1" fill="none"/></svg><span>der_spektroskop…</span></div><div class="task" style="left:164px"><svg class="ticon" width="17" height="15" viewBox="0 0 17 15" style="opacity:0.45"><rect x="0.5" y="0.5" width="16" height="14" rx="1.5" fill="#d3d7cf" stroke="#555753"/><rect x="2" y="2" width="13" height="10" fill="#2e3436"/><path d="M3.5 4l2 1.5l-2 1.5M6.5 8.5h3" stroke="#eeeeec" stroke-width="1" fill="none"/></svg><span>[der_spektrosko…</span></div><div class="task" style="left:316px"><svg class="wicon dim" width="14" height="12" viewBox="0 0 14 12"><rect x="0.5" y="0.5" width="13" height="11" fill="#fdfdfc" stroke="#8c8a86"/><rect x="2" y="4" width="10" height="6" fill="#dfe1dc"/><rect x="0" y="0" width="14" height="3" fill="#3465a4"/><rect x="1" y="1" width="12" height="1" fill="#6d93c8"/></svg><span>[XHelp]</span></div><div class="task" style="left:468px"><svg class="wicon dim" width="14" height="12" viewBox="0 0 14 12"><rect x="0.5" y="0.5" width="13" height="11" fill="#fdfdfc" stroke="#8c8a86"/><rect x="2" y="4" width="10" height="6" fill="#dfe1dc"/><rect x="0" y="0" width="14" height="3" fill="#3465a4"/><rect x="1" y="1" width="12" height="1" fill="#6d93c8"/></svg><span>[XHelp]</span></div><div class="task" style="left:620px"><svg class="wicon" width="14" height="12" viewBox="0 0 14 12"><rect x="0.5" y="0.5" width="13" height="11" fill="#fdfdfc" stroke="#8c8a86"/><rect x="2" y="4" width="10" height="6" fill="#dfe1dc"/><rect x="0" y="0" width="14" height="3" fill="#3465a4"/><rect x="1" y="1" width="12" height="1" fill="#6d93c8"/></svg><span>MIDAS_01 grap…</span></div><div class="task" style="left:772px"><svg class="wicon" width="14" height="12" viewBox="0 0 14 12"><rect x="0.5" y="0.5" width="13" height="11" fill="#fdfdfc" stroke="#8c8a86"/><rect x="2" y="4" width="10" height="6" fill="#dfe1dc"/><rect x="0" y="0" width="14" height="3" fill="#3465a4"/><rect x="1" y="1" width="12" height="1" fill="#6d93c8"/></svg><span>MIDAS_01 grap…</span></div><div class="task act" style="left:924px"><svg class="wicon" width="14" height="12" viewBox="0 0 14 12"><rect x="0.5" y="0.5" width="13" height="11" fill="#fdfdfc" stroke="#8c8a86"/><rect x="2" y="4" width="10" height="6" fill="#dfe1dc"/><rect x="0" y="0" width="14" height="3" fill="#3465a4"/><rect x="1" y="1" width="12" height="1" fill="#6d93c8"/></svg><span>MIDAS_01 grap…</span></div>
<svg style="position:absolute;left:1085px;top:1px" width="22" height="23" viewBox="0 0 22 23"><path d="M2.500 5.500l2.200 15.200c1.800 1.400 10.800 1.400 12.600 0l2.200-15.200z" fill="#d9dad7" stroke="#7b7d79" stroke-width=".9"/><path d="M4 8l13 10M5 13l10 7M8 6l10 8M17 8l-12 10M18 12l-11 8M14 6l-10 7" stroke="#8d8f8b" stroke-width=".6"/><ellipse cx="11" cy="5" rx="9" ry="3" fill="#efefed" stroke="#7b7d79" stroke-width=".9"/><ellipse cx="11" cy="5" rx="6" ry="1.700" fill="#babcb8"/><path d="M6 4l3-2.500l3 1.500l3-1l2 2" fill="#fff" stroke="#aaa" stroke-width=".5"/></svg>
<div style="position:absolute;left:1119px;top:2px;width:246px;height:22px;background:#aba7a2;border-radius:2px"></div>
<div style="position:absolute;left:1119px;top:2px;width:40px;height:22px;background:#edeceb;border:2px solid #111"></div>
<svg style="position:absolute;left:1131px;top:5px" width="17" height="15" viewBox="0 0 17 15"><path d="M1 2.500a1.500 1.500 0 0 1 1.500-1.500h4.500l1.500 1.500h6a1.500 1.500 0 0 1 1.500 1.500v8.500a1.500 1.500 0 0 1-1.500 1.500h-12a1.500 1.500 0 0 1-1.500-1.500z" fill="#6d97d0" stroke="#3a63a2"/><path d="M1.500 5h14" stroke="#8fb1e0"/></svg>
<div style="position:absolute;left:1160px;top:2px;width:40px;height:22px;background:#5a86c4"></div>
<div style="position:absolute;left:1162px;top:5px;width:18px;height:16px;background:#cfe0f5;border:1px solid #eaf1fb;border-top:3px solid #a9c5ea"></div>
<div style="position:absolute;left:1180px;top:5px;width:18px;height:13px;background:#8eafdf;border:1px solid #e6eefa"></div>
<div style="position:absolute;left:1185px;top:20px;width:14px;height:3px;background:#c4d7f0;border:1px solid #eef3fb"></div>
<div style="position:absolute;left:1200px;top:2px;width:1px;height:22px;background:#e9e8e6"></div>
<div style="position:absolute;left:1241px;top:2px;width:1px;height:22px;background:#e9e8e6"></div>
<div style="position:absolute;left:1282px;top:2px;width:1px;height:22px;background:#e9e8e6"></div>
<div style="position:absolute;left:1323px;top:2px;width:1px;height:22px;background:#e9e8e6"></div>
<svg style="position:absolute;left:3px;top:4px" width="7" height="19" viewBox="0 0 7 19"><g fill="#c4c2bd"><rect x="1" y="1" width="1" height="1"/><rect x="4" y="1" width="1" height="1"/><rect x="1" y="4" width="1" height="1"/><rect x="4" y="4" width="1" height="1"/><rect x="1" y="7" width="1" height="1"/><rect x="4" y="7" width="1" height="1"/><rect x="1" y="10" width="1" height="1"/><rect x="4" y="10" width="1" height="1"/><rect x="1" y="13" width="1" height="1"/><rect x="4" y="13" width="1" height="1"/><rect x="1" y="16" width="1" height="1"/><rect x="4" y="16" width="1" height="1"/></g></svg>
</div>
</body></html>
